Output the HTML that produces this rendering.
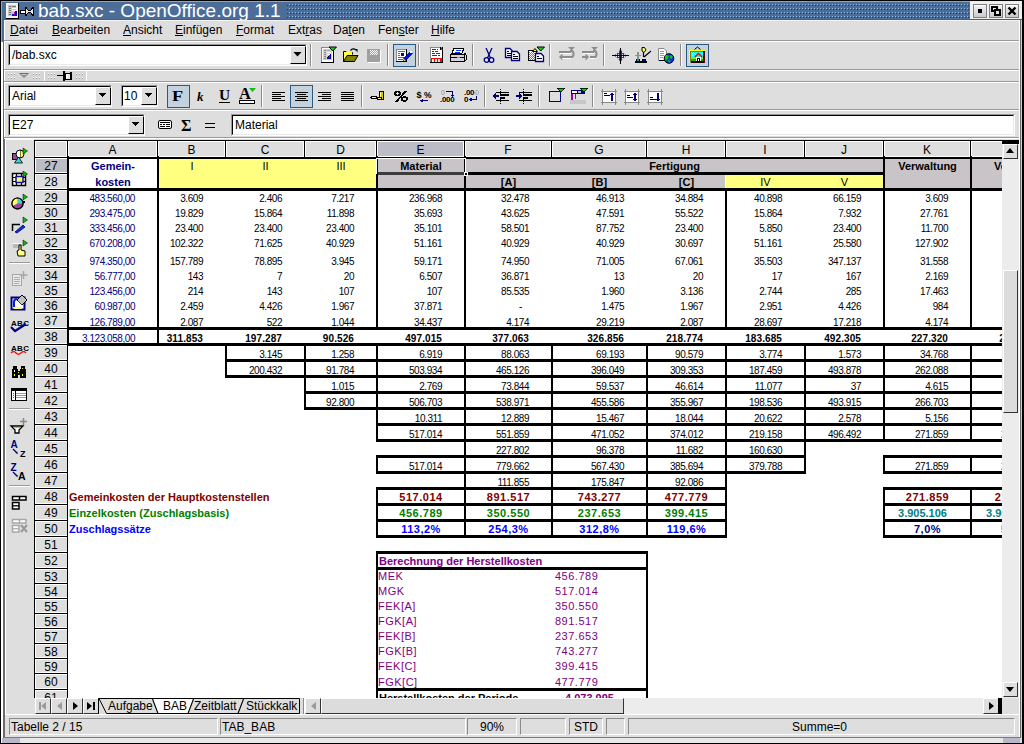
<!DOCTYPE html><html><head><meta charset="utf-8"><style>
html,body{margin:0;padding:0;}
body{width:1024px;height:744px;overflow:hidden;position:relative;background:#dedede;font-family:"Liberation Sans", sans-serif;}
div{position:absolute;}
.t{white-space:nowrap;line-height:1;}
svg{position:absolute;}
</style></head><body>
<div style="left:0px;top:0px;width:1024px;height:1px;background:#000"></div>
<div style="left:0px;top:1px;width:970px;height:1px;background:#7aaae0"></div>
<svg style="left:0;top:2px" width="970" height="17"><defs><pattern id="dots" x="0" y="0" width="3" height="4" patternUnits="userSpaceOnUse"><rect width="3" height="4" fill="#4d6d99"/><rect x="1" y="2" width="1" height="1" fill="#86b6ec"/><rect x="2" y="3" width="1" height="1" fill="#30343a"/></pattern></defs><rect width="970" height="17" fill="url(#dots)"/></svg>
<div style="left:0px;top:2px;width:287px;height:17px;background:#4d6d99"></div>
<div style="left:0px;top:19px;width:1024px;height:1px;background:#5a5a5a"></div>
<svg style="left:6px;top:3px" width="30" height="16" shape-rendering="crispEdges"><rect x="0" y="0" width="13" height="16" fill="#000"/><rect x="0" y="0" width="12" height="15" fill="#f4f2f4"/><rect x="2" y="2" width="8" height="11" fill="#c8c8c8"/><rect x="3" y="3" width="2" height="1" fill="#777"/><rect x="6" y="3" width="4" height="1" fill="#777"/><rect x="3" y="5" width="2" height="1" fill="#777"/><rect x="6" y="5" width="4" height="1" fill="#fff"/><rect x="3" y="7" width="2" height="1" fill="#777"/><rect x="6" y="7" width="4" height="1" fill="#fff"/><rect x="3" y="9" width="2" height="1" fill="#777"/><rect x="3" y="11" width="2" height="1" fill="#777"/><rect x="6" y="11" width="3" height="2" fill="#0010ff"/><rect x="8" y="9" width="1" height="4" fill="#a000a0"/><rect x="9" y="8" width="2" height="5" fill="#0000c0"/><rect x="14" y="7" width="6" height="4" fill="#000"/><rect x="15" y="8" width="5" height="2" fill="#fff"/><path d="M19 4 L21 4 L22 7 L25 7 L26 4 L28 4 L28 13 L26 13 L25 10 L22 10 L21 13 L19 13 Z" fill="#000"/><path d="M20 6 L21 6 L22 8 L25 8 L26 6 L27 6 L27 11 L26 11 L25 9 L22 9 L21 11 L20 11 Z" fill="#e8e8f0"/></svg>
<div class="t" style="left:38px;top:1px;color:#fff;font-size:19px;letter-spacing:0px">bab.sxc - OpenOffice.org 1.1</div>
<div style="left:970px;top:1px;width:52px;height:18px;background:#efefef"></div>
<div style="left:973px;top:4px;width:14px;height:14px;background:linear-gradient(#f4f4f4,#c8c8d0);border:1px solid #808080;box-sizing:border-box"></div>
<div style="left:974px;top:5px;width:12px;height:1px;background:#fff"></div>
<div style="left:989px;top:4px;width:14px;height:14px;background:linear-gradient(#f4f4f4,#c8c8d0);border:1px solid #808080;box-sizing:border-box"></div>
<div style="left:990px;top:5px;width:12px;height:1px;background:#fff"></div>
<div style="left:1005px;top:4px;width:14px;height:14px;background:linear-gradient(#f4f4f4,#c8c8d0);border:1px solid #808080;box-sizing:border-box"></div>
<div style="left:1006px;top:5px;width:12px;height:1px;background:#fff"></div>
<div style="left:978px;top:9px;width:4px;height:4px;background:#000"></div>
<svg style="left:991px;top:6px" width="11" height="11" shape-rendering="crispEdges"><rect x="0" y="0" width="7" height="6" fill="#000"/><rect x="2" y="2" width="3" height="2" fill="#e8e8e8"/><rect x="3" y="3" width="7" height="7" fill="#000"/><rect x="5" y="5" width="3" height="3" fill="#e0e0e0"/></svg>
<svg style="left:1007px;top:6px" width="11" height="11"><path d="M1.5 1.5 L8.5 8.5 M8.5 1.5 L1.5 8.5" stroke="#000" stroke-width="2.4"/><rect x="4" y="4" width="2" height="2" fill="#000"/></svg>
<div style="left:0px;top:1px;width:1px;height:743px;background:#000"></div>
<div style="left:1px;top:1px;width:1px;height:41px;background:#7aaae0"></div>
<div style="left:2px;top:2px;width:1px;height:40px;background:#4d6d99"></div>
<div style="left:1px;top:42px;width:1px;height:702px;background:#fff"></div>
<div style="left:2px;top:42px;width:1px;height:702px;background:#fff"></div>
<div style="left:3px;top:20px;width:1px;height:724px;background:#6a6a6a"></div>
<div style="left:4px;top:20px;width:1px;height:119px;background:#fff"></div>
<div style="left:4px;top:139px;width:1px;height:598px;background:#6a6a6a"></div>
<div style="left:1019px;top:20px;width:1px;height:718px;background:#fff"></div>
<div style="left:1020px;top:20px;width:1px;height:718px;background:#6a6a6a"></div>
<div style="left:1021px;top:20px;width:1px;height:718px;background:#cfcfcf"></div>
<div style="left:1022px;top:0px;width:1px;height:744px;background:#000"></div>
<div style="left:1023px;top:0px;width:1px;height:744px;background:#000"></div>
<div style="left:4px;top:20px;width:1015px;height:1px;background:#f4f4f4"></div>
<div style="left:4px;top:40px;width:1015px;height:1px;background:#9a9a9a"></div>
<div class="t" style="left:10px;top:24px;color:#000;font-size:12px"><u>D</u>atei</div>
<div class="t" style="left:52px;top:24px;color:#000;font-size:12px"><u>B</u>earbeiten</div>
<div class="t" style="left:123px;top:24px;color:#000;font-size:12px"><u>A</u>nsicht</div>
<div class="t" style="left:175px;top:24px;color:#000;font-size:12px"><u>E</u>infügen</div>
<div class="t" style="left:236px;top:24px;color:#000;font-size:12px"><u>F</u>ormat</div>
<div class="t" style="left:288px;top:24px;color:#000;font-size:12px">Ext<u>r</u>as</div>
<div class="t" style="left:333px;top:24px;color:#000;font-size:12px">Da<u>t</u>en</div>
<div class="t" style="left:378px;top:24px;color:#000;font-size:12px">Fen<u>s</u>ter</div>
<div class="t" style="left:431px;top:24px;color:#000;font-size:12px"><u>H</u>ilfe</div>
<div style="left:4px;top:41px;width:1015px;height:1px;background:#fff"></div>
<div style="left:4px;top:69px;width:1015px;height:1px;background:#9a9a9a"></div>
<div style="left:4px;top:70px;width:1015px;height:1px;background:#fff"></div>
<div style="left:8px;top:44px;width:299px;height:22px;background:#fff;border-top:1px solid #9a9a9a;border-left:1px solid #9a9a9a;border-right:1px solid #fff;border-bottom:1px solid #fff;box-sizing:border-box"></div>
<div style="left:9px;top:45px;width:297px;height:20px;border-top:1px solid #000;border-left:1px solid #000;border-right:1px solid #eaeaea;border-bottom:1px solid #eaeaea;box-sizing:border-box"></div>
<div class="t" style="left:12px;top:49px;font-size:12px;color:#000">/bab.sxc</div>
<div style="left:290px;top:46px;width:16px;height:18px;background:#dedede;border-top:1px solid #fff;border-left:1px solid #fff;border-right:1px solid #000;border-bottom:1px solid #000;box-sizing:border-box"></div>
<svg style="left:293px;top:52px" width="10" height="6"><path d="M0.5 0 L8.5 0 L4.5 4.5 Z" fill="#000"/></svg>
<div style="left:310px;top:44px;width:1px;height:22px;background:#8a8a8a"></div>
<div style="left:311px;top:44px;width:1px;height:22px;background:#fff"></div>
<div style="left:387px;top:44px;width:1px;height:22px;background:#8a8a8a"></div>
<div style="left:388px;top:44px;width:1px;height:22px;background:#fff"></div>
<div style="left:418px;top:44px;width:1px;height:22px;background:#8a8a8a"></div>
<div style="left:419px;top:44px;width:1px;height:22px;background:#fff"></div>
<div style="left:472px;top:44px;width:1px;height:22px;background:#8a8a8a"></div>
<div style="left:473px;top:44px;width:1px;height:22px;background:#fff"></div>
<div style="left:549px;top:44px;width:1px;height:22px;background:#8a8a8a"></div>
<div style="left:550px;top:44px;width:1px;height:22px;background:#fff"></div>
<div style="left:603px;top:44px;width:1px;height:22px;background:#8a8a8a"></div>
<div style="left:604px;top:44px;width:1px;height:22px;background:#fff"></div>
<div style="left:680px;top:44px;width:1px;height:22px;background:#8a8a8a"></div>
<div style="left:681px;top:44px;width:1px;height:22px;background:#fff"></div>
<div style="left:393px;top:44px;width:23px;height:23px;background:#c2d2de;border:1px solid #2a5a84;box-sizing:border-box"></div>
<div style="left:686px;top:44px;width:23px;height:23px;background:#c2d2de;border:1px solid #2a5a84;box-sizing:border-box"></div>
<svg style="left:0px;top:0px" width="720" height="70" shape-rendering="crispEdges"><rect x="321" y="47" width="13" height="16" fill="#000"/><rect x="321" y="47" width="12" height="15" fill="#888"/><rect x="322" y="48" width="11" height="14" fill="#fff"/><rect x="323" y="49" width="9" height="11" fill="#d0d0d0"/><rect x="324" y="50" width="2" height="1" fill="#888"/><rect x="327" y="50" width="3" height="1" fill="#a8a8a8"/><rect x="324" y="52" width="2" height="1" fill="#888"/><rect x="327" y="52" width="4" height="1" fill="#fff"/><rect x="324" y="54" width="2" height="1" fill="#888"/><rect x="327" y="54" width="4" height="1" fill="#fff"/><rect x="324" y="56" width="2" height="1" fill="#888"/><rect x="324" y="58" width="2" height="1" fill="#888"/><rect x="327" y="57" width="3" height="2" fill="#0000ff"/><rect x="329" y="55" width="1" height="3" fill="#a000a0"/><rect x="330" y="54" width="1" height="5" fill="#0000a0"/><rect x="328" y="56" width="1" height="1" fill="#000"/><path d="M329 47 L336.5 47 L332.75 51 Z" fill="#00e000" stroke="#000" stroke-width="1" shape-rendering="auto"/></svg>
<svg style="left:0px;top:0px" width="720" height="70" shape-rendering="crispEdges"><path d="M343.5 61.5 L343.5 51.5 L346 51.5 L347 52.5 L352.5 52.5 L352.5 54.5" fill="#ffff40" stroke="#000" stroke-width="1" shape-rendering="auto"/><rect x="344" y="52" width="8" height="2" fill="#ffff40"/><rect x="344" y="54" width="3" height="6" fill="#ffff40"/><rect x="345" y="53" width="1" height="1" fill="#fff"/><rect x="345" y="55" width="1" height="1" fill="#fff"/><rect x="347" y="53" width="1" height="1" fill="#fff"/><path d="M343.5 61.5 L347 55.5 L358 55.5 L354.5 61.5 Z" fill="#808000" stroke="#000" stroke-width="1" shape-rendering="auto"/><path d="M350.5 50.5 Q353 47.5 356 50" fill="none" stroke="#000" stroke-width="1.2" shape-rendering="auto"/><path d="M355 49 L357.5 49 L357.5 52.5 Z" fill="#000" shape-rendering="auto"/></svg>
<svg style="left:0px;top:0px" width="720" height="70" shape-rendering="crispEdges"><rect x="367" y="49" width="13" height="13" fill="#a0a0a0"/><rect x="368" y="62" width="13" height="1" fill="#fff"/><rect x="380" y="50" width="1" height="13" fill="#fff"/><rect x="370" y="50" width="1" height="1" fill="#fff"/><rect x="372" y="50" width="1" height="1" fill="#fff"/><rect x="374" y="50" width="1" height="1" fill="#fff"/><rect x="376" y="50" width="1" height="1" fill="#fff"/><rect x="371" y="51" width="1" height="1" fill="#fff"/><rect x="373" y="51" width="1" height="1" fill="#fff"/><rect x="375" y="51" width="1" height="1" fill="#fff"/><rect x="377" y="51" width="1" height="1" fill="#fff"/><rect x="370" y="52" width="1" height="1" fill="#fff"/><rect x="372" y="52" width="1" height="1" fill="#fff"/><rect x="374" y="52" width="1" height="1" fill="#fff"/><rect x="376" y="52" width="1" height="1" fill="#fff"/><rect x="371" y="53" width="1" height="1" fill="#fff"/><rect x="373" y="53" width="1" height="1" fill="#fff"/><rect x="375" y="53" width="1" height="1" fill="#fff"/><rect x="377" y="53" width="1" height="1" fill="#fff"/><rect x="370" y="54" width="1" height="1" fill="#fff"/><rect x="372" y="54" width="1" height="1" fill="#fff"/><rect x="374" y="54" width="1" height="1" fill="#fff"/><rect x="376" y="54" width="1" height="1" fill="#fff"/></svg>
<svg style="left:0px;top:0px" width="720" height="70" shape-rendering="crispEdges"><rect x="396" y="49" width="11" height="13" fill="#000"/><rect x="396" y="49" width="10" height="12" fill="#888"/><rect x="397" y="50" width="9" height="11" fill="#fff"/><rect x="398" y="51" width="7" height="1" fill="#666"/><rect x="398" y="53" width="2" height="1" fill="#666"/><rect x="398" y="55" width="2" height="1" fill="#666"/><rect x="398" y="57" width="6" height="1" fill="#666"/><rect x="398" y="59" width="5" height="1" fill="#666"/><rect x="401" y="53" width="3" height="3" fill="#0000ff"/><rect x="402" y="54" width="1" height="1" fill="#000080"/><path d="M403.5 58.5 L410.5 51.5 L412.5 53.5 L405.5 60.5 Z" fill="#0010e0" stroke="#000" stroke-width="0.7" shape-rendering="auto"/><rect x="410" y="51" width="2" height="2" fill="#fff"/><path d="M402.5 61 L403.5 58.5 L405.5 60.5 Z" fill="#f0e000" shape-rendering="auto"/><rect x="403" y="60" width="1" height="1" fill="#008000"/></svg>
<svg style="left:0px;top:0px" width="720" height="70" shape-rendering="crispEdges"><rect x="430" y="47" width="13" height="16" fill="#000"/><rect x="430" y="47" width="12" height="15" fill="#888"/><rect x="431" y="48" width="11" height="14" fill="#fff"/><path d="M440 47 L443 50 L440 50 Z" fill="#ff0000"/><rect x="440" y="47" width="1" height="3" fill="#000"/><rect x="432" y="49" width="4" height="1" fill="#0030ff"/><rect x="437" y="49" width="1" height="1" fill="#0030ff"/><rect x="432" y="51" width="2" height="1" fill="#0030ff"/><rect x="435" y="51" width="3" height="1" fill="#0030ff"/><rect x="432" y="53" width="3" height="1" fill="#0030ff"/><rect x="436" y="53" width="4" height="1" fill="#0030ff"/><rect x="432" y="55" width="5" height="1" fill="#0030ff"/><rect x="438" y="55" width="2" height="1" fill="#0030ff"/><rect x="431" y="58" width="11" height="4" fill="#ff0000"/><rect x="432" y="59" width="2" height="3" fill="#f0f0f0"/><rect x="435" y="59" width="2" height="3" fill="#f0f0f0"/><rect x="438" y="59" width="2" height="3" fill="#f0f0f0"/></svg>
<svg style="left:0px;top:0px" width="720" height="70" shape-rendering="crispEdges"><path d="M454 48 L464 48 L462 53 L452 53 Z" fill="#fff" stroke="#000" stroke-width="1"/><rect x="456" y="49.5" width="5" height="1" fill="#0030ff"/><rect x="455" y="51.5" width="5" height="1" fill="#0030ff"/><rect x="450.5" y="54.5" width="14" height="3.5" fill="#d8d0d8" stroke="#000" stroke-width="1"/><rect x="450.5" y="57.5" width="14" height="4" fill="#d8d0d8" stroke="#000" stroke-width="1"/><rect x="457" y="57" width="3" height="1.2" fill="#00ff00"/><path d="M464.5 53 L466 55 L466 60 L464.5 61.5" fill="none" stroke="#000" stroke-width="1"/></svg>
<svg style="left:483px;top:48px" width="12" height="16" shape-rendering="crispEdges"><path d="M3 0 L7.5 10 M9 0 L4.5 10" stroke="#000080" stroke-width="1.3" fill="none" shape-rendering="auto"/><circle cx="3.5" cy="12" r="2.3" fill="none" stroke="#000080" stroke-width="1.3" shape-rendering="auto"/><circle cx="8.5" cy="12" r="2.3" fill="none" stroke="#000080" stroke-width="1.3" shape-rendering="auto"/></svg>
<svg style="left:0px;top:0px" width="720" height="70" shape-rendering="crispEdges"><path d="M505.5 48.5 L510 48.5 L512 50.5 L512 57.5 L505.5 57.5 Z" fill="#fff" stroke="#000080" stroke-width="1.3" shape-rendering="auto"/><rect x="507" y="51" width="2" height="1" fill="#000"/><rect x="507" y="53" width="4" height="1" fill="#000"/><rect x="507" y="55" width="4" height="1" fill="#000"/><path d="M511.5 51.5 L517 51.5 L519.5 54 L519.5 60.5 L511.5 60.5 Z" fill="#fff" stroke="#000080" stroke-width="1.3" shape-rendering="auto"/><rect x="513" y="54" width="2" height="1" fill="#000"/><rect x="513" y="56" width="5" height="1" fill="#000"/><rect x="513" y="58" width="5" height="1" fill="#000"/></svg>
<svg style="left:0px;top:0px" width="720" height="70" shape-rendering="crispEdges"><rect x="528" y="50" width="9" height="11" fill="#000"/><rect x="529" y="51" width="7" height="9" fill="#fff"/><rect x="529" y="52" width="1" height="1" fill="#908000"/><rect x="531" y="52" width="1" height="1" fill="#908000"/><rect x="533" y="52" width="1" height="1" fill="#908000"/><rect x="530" y="53" width="1" height="1" fill="#908000"/><rect x="532" y="53" width="1" height="1" fill="#908000"/><rect x="534" y="53" width="1" height="1" fill="#908000"/><rect x="529" y="54" width="1" height="1" fill="#908000"/><rect x="531" y="54" width="1" height="1" fill="#908000"/><rect x="533" y="54" width="1" height="1" fill="#908000"/><rect x="530" y="55" width="1" height="1" fill="#908000"/><rect x="532" y="55" width="1" height="1" fill="#908000"/><rect x="534" y="55" width="1" height="1" fill="#908000"/><rect x="529" y="56" width="1" height="1" fill="#908000"/><rect x="531" y="56" width="1" height="1" fill="#908000"/><rect x="533" y="56" width="1" height="1" fill="#908000"/><rect x="530" y="57" width="1" height="1" fill="#908000"/><rect x="532" y="57" width="1" height="1" fill="#908000"/><rect x="534" y="57" width="1" height="1" fill="#908000"/><rect x="529" y="58" width="1" height="1" fill="#908000"/><rect x="531" y="58" width="1" height="1" fill="#908000"/><rect x="533" y="58" width="1" height="1" fill="#908000"/><rect x="530" y="59" width="1" height="1" fill="#908000"/><rect x="532" y="59" width="1" height="1" fill="#908000"/><rect x="534" y="59" width="1" height="1" fill="#908000"/><path d="M532.5 51.5 L535 48.5 L537.5 51.5 Z" fill="#ffff00" stroke="#000" stroke-width="1" shape-rendering="auto"/><path d="M535.5 53.5 L541 53.5 L543.5 56 L543.5 61.5 L535.5 61.5 Z" fill="#fff" stroke="#000080" stroke-width="1.3" shape-rendering="auto"/><rect x="537" y="56" width="2" height="1" fill="#000"/><rect x="537" y="58" width="5" height="1" fill="#000"/><path d="M537 47 L544.5 47 L540.75 51 Z" fill="#00e000" stroke="#000" stroke-width="1" shape-rendering="auto"/></svg>
<svg style="left:0px;top:0px" width="720" height="70" shape-rendering="crispEdges"><path d="M568 47 L575 47 L571.5 50.5 Z" fill="#8c8c8c" shape-rendering="auto"/><rect x="559" y="51" width="12" height="2" fill="#8c8c8c"/><path d="M570 51 L571.5 51 Q573.5 51 573.5 54 Q573.5 57 571.5 57 L570 57" fill="none" stroke="#8c8c8c" stroke-width="2" shape-rendering="auto"/><rect x="561" y="56" width="10" height="2" fill="#8c8c8c"/><path d="M559 57 L562.5 53.5 L562.5 60.5 Z" fill="#8c8c8c" shape-rendering="auto"/><rect x="560" y="53" width="11" height="1" fill="#fff"/><rect x="562" y="58" width="9" height="1" fill="#fff"/></svg>
<svg style="left:0px;top:0px" width="720" height="70" shape-rendering="crispEdges"><path d="M591 47 L598 47 L594.5 50.5 Z" fill="#8c8c8c" shape-rendering="auto"/><rect x="582" y="51" width="12" height="2" fill="#8c8c8c"/><path d="M593 51 L594.5 51 Q596.5 51 596.5 54 Q596.5 57 594.5 57 L590 57" fill="none" stroke="#8c8c8c" stroke-width="2" shape-rendering="auto"/><rect x="582" y="56" width="4" height="2" fill="#8c8c8c"/><path d="M589 57 L585.5 53.5 L585.5 60.5 Z" fill="#8c8c8c" shape-rendering="auto"/><rect x="583" y="53" width="11" height="1" fill="#fff"/><rect x="590" y="58" width="5" height="1" fill="#fff"/></svg>
<svg style="left:0px;top:0px" width="720" height="70" shape-rendering="crispEdges"><defs><pattern id="nvd" width="2" height="2" patternUnits="userSpaceOnUse"><rect width="2" height="2" fill="#2030b0"/><rect width="1" height="1" fill="#e8e8ff"/></pattern></defs><path d="M620.5 48 Q622 54 628.5 55.5 Q622 57 620.5 63 Q619 57 612.5 55.5 Q619 54 620.5 48 Z" fill="url(#nvd)" shape-rendering="auto"/><rect x="612" y="55" width="17" height="1" fill="#000"/><rect x="620" y="48" width="1" height="16" fill="#000"/></svg>
<svg style="left:0px;top:0px" width="720" height="70" shape-rendering="crispEdges"><rect x="646" y="47" width="1" height="1" fill="#ffff00"/><rect x="648" y="47" width="1" height="1" fill="#ffff00"/><rect x="650" y="47" width="1" height="1" fill="#ffff00"/><rect x="645" y="48" width="1" height="1" fill="#ffff00"/><rect x="647" y="48" width="1" height="1" fill="#ffff00"/><rect x="649" y="48" width="1" height="1" fill="#ffff00"/><rect x="651" y="48" width="1" height="1" fill="#ffff00"/><rect x="646" y="49" width="1" height="1" fill="#ffff00"/><rect x="648" y="49" width="1" height="1" fill="#ffff00"/><rect x="650" y="49" width="1" height="1" fill="#ffff00"/><rect x="645" y="50" width="1" height="1" fill="#ffff00"/><rect x="647" y="50" width="1" height="1" fill="#ffff00"/><rect x="649" y="50" width="1" height="1" fill="#ffff00"/><rect x="651" y="50" width="1" height="1" fill="#ffff00"/><rect x="646" y="51" width="1" height="1" fill="#ffff00"/><rect x="648" y="51" width="1" height="1" fill="#ffff00"/><rect x="650" y="51" width="1" height="1" fill="#ffff00"/><path d="M642 47.5 L644.5 47.5 L646 50 L644 52.5 L642 51 Z" fill="#ffff40" stroke="#000" stroke-width="1" shape-rendering="auto"/><path d="M643.5 52 L643.5 57 M644 57 L651 51" stroke="#000" stroke-width="1.2" shape-rendering="auto"/><path d="M635 55.5 L641 55.5 M638 52 L638 59" stroke="#909090" stroke-width="1.5"/><rect x="636" y="59" width="4" height="3" fill="#000"/><rect x="635" y="61" width="6" height="2" fill="#000"/><rect x="637" y="59" width="2" height="2" fill="#00a0a0"/><rect x="642" y="59" width="4" height="3" fill="#000"/><rect x="641" y="61" width="6" height="2" fill="#000"/><rect x="643" y="59" width="2" height="2" fill="#0000a0"/></svg>
<svg style="left:0px;top:0px" width="720" height="70" shape-rendering="crispEdges"><path d="M658.5 48.5 L664 48.5 L666.5 51 L666.5 60.5 L658.5 60.5 Z" fill="#fff" stroke="#888" stroke-width="1" shape-rendering="auto"/><rect x="659" y="60" width="8" height="1" fill="#000"/><rect x="660" y="51" width="4" height="1" fill="#999"/><rect x="660" y="53" width="4" height="1" fill="#999"/><rect x="660" y="55" width="4" height="1" fill="#999"/><rect x="660" y="57" width="3" height="1" fill="#999"/><circle cx="669" cy="58.5" r="4.8" fill="#0030e0" stroke="#000" stroke-width="1" shape-rendering="auto"/><path d="M665 56 Q667 54 669 56 Q668 59 666 61 Q664.5 59 665 56 Z M670 55 L672.5 56 L672 59 L670 58 Z M668 60 L671 61 L669 63 Z" fill="#00d000" shape-rendering="auto"/></svg>
<svg style="left:0px;top:0px" width="720" height="70" shape-rendering="crispEdges"><path d="M694.5 49.5 L697.5 47 L700.5 49.5" fill="none" stroke="#000" stroke-width="1" shape-rendering="auto"/><rect x="689" y="50" width="16" height="13" fill="#ffff00"/><rect x="690" y="51" width="15" height="12" fill="#000"/><rect x="690" y="51" width="1" height="12" fill="#fff" opacity="0.6"/><rect x="703" y="52" width="2" height="11" fill="#a00000" opacity="0.6"/><rect x="690" y="51" width="13" height="1" fill="#808000"/><rect x="690" y="51" width="1" height="11" fill="#808000"/><rect x="691" y="52" width="12" height="9" fill="#00ffff"/><rect x="692" y="53" width="1" height="1" fill="#fff"/><rect x="694" y="53" width="1" height="1" fill="#fff"/><rect x="693" y="54" width="1" height="1" fill="#fff"/><rect x="695" y="54" width="1" height="1" fill="#fff"/><rect x="692" y="55" width="1" height="1" fill="#fff"/><rect x="691" y="58" width="12" height="3" fill="#00c000"/><rect x="691" y="58" width="12" height="1" fill="#c0ff00" opacity="0.7"/><path d="M695 57 L698.5 53.5 L702 57" fill="none" stroke="#ff0000" stroke-width="1.5" shape-rendering="auto"/><rect x="696" y="57" width="5" height="4" fill="#fff"/><rect x="697" y="58" width="3" height="3" fill="#000"/><rect x="698" y="59" width="1" height="2" fill="#fff"/><rect x="691" y="61" width="13" height="2" fill="#200000"/></svg>
<div style="left:5px;top:71px;width:40px;height:10px;background:#d6d6d6;border-right:1px solid #fff;box-sizing:border-box"></div>
<div style="left:8px;top:73px;width:1px;height:1px;background:#fff"></div>
<div style="left:8px;top:74px;width:1px;height:1px;background:#a0a0a0"></div>
<div style="left:11px;top:73px;width:1px;height:1px;background:#fff"></div>
<div style="left:11px;top:74px;width:1px;height:1px;background:#a0a0a0"></div>
<div style="left:14px;top:73px;width:1px;height:1px;background:#fff"></div>
<div style="left:14px;top:74px;width:1px;height:1px;background:#a0a0a0"></div>
<div style="left:8px;top:77px;width:1px;height:1px;background:#fff"></div>
<div style="left:8px;top:78px;width:1px;height:1px;background:#a0a0a0"></div>
<div style="left:11px;top:77px;width:1px;height:1px;background:#fff"></div>
<div style="left:11px;top:78px;width:1px;height:1px;background:#a0a0a0"></div>
<div style="left:14px;top:77px;width:1px;height:1px;background:#fff"></div>
<div style="left:14px;top:78px;width:1px;height:1px;background:#a0a0a0"></div>
<div style="left:33px;top:73px;width:1px;height:1px;background:#fff"></div>
<div style="left:33px;top:74px;width:1px;height:1px;background:#a0a0a0"></div>
<div style="left:36px;top:73px;width:1px;height:1px;background:#fff"></div>
<div style="left:36px;top:74px;width:1px;height:1px;background:#a0a0a0"></div>
<div style="left:39px;top:73px;width:1px;height:1px;background:#fff"></div>
<div style="left:39px;top:74px;width:1px;height:1px;background:#a0a0a0"></div>
<div style="left:33px;top:77px;width:1px;height:1px;background:#fff"></div>
<div style="left:33px;top:78px;width:1px;height:1px;background:#a0a0a0"></div>
<div style="left:36px;top:77px;width:1px;height:1px;background:#fff"></div>
<div style="left:36px;top:78px;width:1px;height:1px;background:#a0a0a0"></div>
<div style="left:39px;top:77px;width:1px;height:1px;background:#fff"></div>
<div style="left:39px;top:78px;width:1px;height:1px;background:#a0a0a0"></div>
<div style="left:45px;top:71px;width:42px;height:10px;background:#d6d6d6;border-right:1px solid #fff;box-sizing:border-box"></div>
<div style="left:48px;top:73px;width:1px;height:1px;background:#fff"></div>
<div style="left:48px;top:74px;width:1px;height:1px;background:#a0a0a0"></div>
<div style="left:51px;top:73px;width:1px;height:1px;background:#fff"></div>
<div style="left:51px;top:74px;width:1px;height:1px;background:#a0a0a0"></div>
<div style="left:54px;top:73px;width:1px;height:1px;background:#fff"></div>
<div style="left:54px;top:74px;width:1px;height:1px;background:#a0a0a0"></div>
<div style="left:48px;top:77px;width:1px;height:1px;background:#fff"></div>
<div style="left:48px;top:78px;width:1px;height:1px;background:#a0a0a0"></div>
<div style="left:51px;top:77px;width:1px;height:1px;background:#fff"></div>
<div style="left:51px;top:78px;width:1px;height:1px;background:#a0a0a0"></div>
<div style="left:54px;top:77px;width:1px;height:1px;background:#fff"></div>
<div style="left:54px;top:78px;width:1px;height:1px;background:#a0a0a0"></div>
<div style="left:76px;top:73px;width:1px;height:1px;background:#fff"></div>
<div style="left:76px;top:74px;width:1px;height:1px;background:#a0a0a0"></div>
<div style="left:79px;top:73px;width:1px;height:1px;background:#fff"></div>
<div style="left:79px;top:74px;width:1px;height:1px;background:#a0a0a0"></div>
<div style="left:82px;top:73px;width:1px;height:1px;background:#fff"></div>
<div style="left:82px;top:74px;width:1px;height:1px;background:#a0a0a0"></div>
<div style="left:76px;top:77px;width:1px;height:1px;background:#fff"></div>
<div style="left:76px;top:78px;width:1px;height:1px;background:#a0a0a0"></div>
<div style="left:79px;top:77px;width:1px;height:1px;background:#fff"></div>
<div style="left:79px;top:78px;width:1px;height:1px;background:#a0a0a0"></div>
<div style="left:82px;top:77px;width:1px;height:1px;background:#fff"></div>
<div style="left:82px;top:78px;width:1px;height:1px;background:#a0a0a0"></div>
<svg style="left:19px;top:73px" width="11" height="6" shape-rendering="crispEdges"><path d="M0 0 L10 0 L5 5 Z" fill="#6a6a6a" shape-rendering="auto"/><path d="M2 1 L8 1 L5 4 Z" fill="#d6d6d6" shape-rendering="auto"/><path d="M3.5 2 L6.5 2 L5 3.2 Z" fill="#6a6a6a" shape-rendering="auto"/></svg>
<svg style="left:57px;top:70px" width="18" height="12" shape-rendering="crispEdges"><rect x="0" y="5" width="6" height="1" fill="#000"/><rect x="6" y="1" width="2" height="10" fill="#000"/><rect x="8" y="3" width="6" height="6" fill="#e8e8e8" stroke="#000" stroke-width="1"/><rect x="13" y="2" width="2" height="8" fill="#000"/><rect x="9" y="4" width="2" height="4" fill="#fff"/></svg>
<div style="left:4px;top:81px;width:1015px;height:1px;background:#9a9a9a"></div>
<div style="left:4px;top:82px;width:1015px;height:1px;background:#fff"></div>
<div style="left:4px;top:109px;width:1015px;height:1px;background:#9a9a9a"></div>
<div style="left:4px;top:110px;width:1015px;height:1px;background:#fff"></div>
<div style="left:8px;top:85px;width:104px;height:22px;background:#fff;border-top:1px solid #9a9a9a;border-left:1px solid #9a9a9a;border-right:1px solid #fff;border-bottom:1px solid #fff;box-sizing:border-box"></div>
<div style="left:9px;top:86px;width:102px;height:20px;border-top:1px solid #000;border-left:1px solid #000;border-right:1px solid #eaeaea;border-bottom:1px solid #eaeaea;box-sizing:border-box"></div>
<div class="t" style="left:12px;top:90px;font-size:12px;color:#000">Arial</div>
<div style="left:95px;top:87px;width:16px;height:18px;background:#dedede;border-top:1px solid #fff;border-left:1px solid #fff;border-right:1px solid #000;border-bottom:1px solid #000;box-sizing:border-box"></div>
<svg style="left:98px;top:93px" width="10" height="6" shape-rendering="crispEdges"><path d="M0.5 0 L8.5 0 L4.5 4.5 Z" fill="#000"/></svg>
<div style="left:121px;top:85px;width:37px;height:22px;background:#fff;border-top:1px solid #9a9a9a;border-left:1px solid #9a9a9a;border-right:1px solid #fff;border-bottom:1px solid #fff;box-sizing:border-box"></div>
<div style="left:122px;top:86px;width:35px;height:20px;border-top:1px solid #000;border-left:1px solid #000;border-right:1px solid #eaeaea;border-bottom:1px solid #eaeaea;box-sizing:border-box"></div>
<div class="t" style="left:124px;top:90px;font-size:12px;color:#000">10</div>
<div style="left:141px;top:87px;width:16px;height:18px;background:#dedede;border-top:1px solid #fff;border-left:1px solid #fff;border-right:1px solid #000;border-bottom:1px solid #000;box-sizing:border-box"></div>
<svg style="left:144px;top:93px" width="10" height="6" shape-rendering="crispEdges"><path d="M0.5 0 L8.5 0 L4.5 4.5 Z" fill="#000"/></svg>
<div style="left:167px;top:85px;width:23px;height:23px;background:#c2d2de;border:1px solid #2a5a84;box-sizing:border-box"></div>
<div class="t" style="left:172px;top:89px;font-family:'Liberation Serif',serif;font-weight:bold;font-size:15px;color:#000;transform:scaleX(1.22);transform-origin:0 0">F</div>
<div class="t" style="left:197px;top:90px;font-family:'Liberation Serif',serif;font-weight:bold;font-style:italic;font-size:13px;color:#000">k</div>
<div class="t" style="left:219px;top:89px;font-family:'Liberation Serif',serif;font-weight:bold;font-size:14px;color:#000;transform:scaleX(1.1);transform-origin:0 0">U</div>
<div style="left:219px;top:102px;width:11px;height:1px;background:#000"></div>
<svg style="left:239px;top:87px" width="18" height="18" shape-rendering="crispEdges"><text x="0" y="12" font-size="16.5" font-weight="bold" font-family="Liberation Serif" fill="#000">A</text><rect x="0.5" y="13.5" width="15" height="3" fill="#fff" stroke="#000"/><path d="M10 1 L17 1 L13.5 5 Z" fill="#10c010" shape-rendering="auto"/></svg>
<div style="left:261px;top:85px;width:1px;height:22px;background:#8a8a8a"></div>
<div style="left:262px;top:85px;width:1px;height:22px;background:#fff"></div>
<svg style="left:272px;top:92px" width="14" height="10" shape-rendering="crispEdges"><rect x="0" y="0" width="13" height="1" fill="#000"/><rect x="0" y="2" width="9" height="1" fill="#000"/><rect x="0" y="4" width="13" height="1" fill="#000"/><rect x="0" y="6" width="9" height="1" fill="#000"/><rect x="0" y="8" width="13" height="1" fill="#000"/></svg>
<div style="left:290px;top:85px;width:23px;height:23px;background:#c2d2de;border:1px solid #2a5a84;box-sizing:border-box"></div>
<svg style="left:295px;top:92px" width="14" height="10" shape-rendering="crispEdges"><rect x="0" y="0" width="13" height="1" fill="#000"/><rect x="2" y="2" width="9" height="1" fill="#000"/><rect x="0" y="4" width="13" height="1" fill="#000"/><rect x="2" y="6" width="9" height="1" fill="#000"/><rect x="0" y="8" width="13" height="1" fill="#000"/></svg>
<svg style="left:318px;top:92px" width="14" height="10" shape-rendering="crispEdges"><rect x="0" y="0" width="13" height="1" fill="#000"/><rect x="4" y="2" width="9" height="1" fill="#000"/><rect x="0" y="4" width="13" height="1" fill="#000"/><rect x="4" y="6" width="9" height="1" fill="#000"/><rect x="0" y="8" width="13" height="1" fill="#000"/></svg>
<svg style="left:341px;top:92px" width="14" height="10" shape-rendering="crispEdges"><rect x="0" y="0" width="13" height="1" fill="#000"/><rect x="0" y="2" width="13" height="1" fill="#000"/><rect x="0" y="4" width="13" height="1" fill="#000"/><rect x="0" y="6" width="13" height="1" fill="#000"/><rect x="0" y="8" width="13" height="1" fill="#000"/></svg>
<div style="left:361px;top:85px;width:1px;height:22px;background:#8a8a8a"></div>
<div style="left:362px;top:85px;width:1px;height:22px;background:#fff"></div>
<svg style="left:0px;top:0px" width="700" height="110" shape-rendering="crispEdges"><rect x="379.5" y="91.5" width="4" height="8" fill="#d8c800" stroke="#000" stroke-width="1"/><rect x="380" y="92" width="1" height="7" fill="#fff8a0"/><ellipse cx="374" cy="97.5" rx="2.5" ry="1.5" fill="#ffff60" stroke="#000" stroke-width="1"/><ellipse cx="379.5" cy="98.5" rx="2.5" ry="1.5" fill="#ffff60" stroke="#000" stroke-width="1"/><path d="M370 97 L372 97" stroke="#000"/></svg>
<svg style="left:0px;top:0px" width="700" height="110" shape-rendering="crispEdges"><ellipse cx="397.5" cy="93.5" rx="2.5" ry="2" fill="none" stroke="#000" stroke-width="1.8"/><ellipse cx="404.5" cy="99" rx="2.5" ry="2" fill="none" stroke="#000" stroke-width="1.8"/><path d="M396 102 L406 91" stroke="#000" stroke-width="1.8"/></svg>
<svg style="left:0px;top:0px" width="700" height="110" shape-rendering="crispEdges"><text x="416.5" y="97.5" font-size="9" font-weight="bold" font-family="Liberation Sans" fill="#000">$</text><text x="424" y="98" font-size="8.5" font-weight="bold" font-family="Liberation Sans" fill="#000">%</text><rect x="421" y="100" width="7" height="1.2" fill="#000080"/><path d="M420 100.6 L423 98.6 L423 102.6 Z" fill="#000080"/></svg>
<svg style="left:0px;top:0px" width="700" height="110" shape-rendering="crispEdges"><text x="441" y="95" font-size="7" font-family="Liberation Sans" fill="#909090">0</text><path d="M446 91.5 L452.5 91.5 L452.5 95" stroke="#000080" stroke-width="1.3" fill="none"/><path d="M450.5 94.5 L454.5 94.5 L452.5 97 Z" fill="#000080"/><text x="440" y="102" font-size="8" font-weight="bold" font-family="Liberation Sans" fill="#000" letter-spacing="-0.3">.000</text></svg>
<svg style="left:0px;top:0px" width="700" height="110" shape-rendering="crispEdges"><text x="464" y="95" font-size="8" font-weight="bold" font-family="Liberation Sans" fill="#000" letter-spacing="-0.3">.00</text><text x="475" y="95" font-size="7" font-family="Liberation Sans" fill="#909090">0</text><text x="464" y="102" font-size="8" font-weight="bold" font-family="Liberation Sans" fill="#000">0</text><path d="M470 99.5 L476.5 99.5 L476.5 96" stroke="#000080" stroke-width="1.3" fill="none"/><path d="M468.5 99.5 L471.5 97.5 L471.5 101.5 Z" fill="#000080"/></svg>
<div style="left:484px;top:85px;width:1px;height:22px;background:#8a8a8a"></div>
<div style="left:485px;top:85px;width:1px;height:22px;background:#fff"></div>
<svg style="left:0px;top:0px" width="700" height="110" shape-rendering="crispEdges"><rect x="500" y="89" width="1" height="1" fill="#000"/><rect x="500" y="91" width="1" height="1" fill="#000"/><rect x="500" y="93" width="1" height="1" fill="#000"/><rect x="500" y="95" width="1" height="1" fill="#000"/><rect x="500" y="97" width="1" height="1" fill="#000"/><rect x="500" y="99" width="1" height="1" fill="#000"/><rect x="500" y="101" width="1" height="1" fill="#000"/><rect x="500" y="103" width="1" height="1" fill="#000"/><rect x="496" y="92" width="13" height="1" fill="#000"/><rect x="500" y="94" width="9" height="2" fill="#000"/><rect x="500" y="97" width="5" height="2" fill="#000"/><rect x="496" y="100" width="13" height="1" fill="#000"/><rect x="495" y="95" width="4" height="2" fill="#000080"/><path d="M492 96 L496 93 L496 99 Z" fill="#000080"/></svg>
<svg style="left:0px;top:0px" width="700" height="110" shape-rendering="crispEdges"><rect x="523" y="89" width="1" height="1" fill="#000"/><rect x="523" y="91" width="1" height="1" fill="#000"/><rect x="523" y="93" width="1" height="1" fill="#000"/><rect x="523" y="95" width="1" height="1" fill="#000"/><rect x="523" y="97" width="1" height="1" fill="#000"/><rect x="523" y="99" width="1" height="1" fill="#000"/><rect x="523" y="101" width="1" height="1" fill="#000"/><rect x="523" y="103" width="1" height="1" fill="#000"/><rect x="519" y="92" width="13" height="1" fill="#000"/><rect x="523" y="94" width="9" height="2" fill="#000"/><rect x="523" y="97" width="5" height="2" fill="#000"/><rect x="519" y="100" width="13" height="1" fill="#000"/><rect x="516" y="95" width="4" height="2" fill="#000080"/><path d="M523 96 L519 93 L519 99 Z" fill="#000080"/></svg>
<div style="left:538px;top:85px;width:1px;height:22px;background:#8a8a8a"></div>
<div style="left:539px;top:85px;width:1px;height:22px;background:#fff"></div>
<svg style="left:0px;top:0px" width="700" height="110" shape-rendering="crispEdges"><rect x="549.5" y="91.5" width="11" height="10" fill="none" stroke="#000080" stroke-width="1.2"/><path d="M556.5 88 L564.5 88 L560.5 92 Z" fill="#00d000" stroke="#000" stroke-width="0.8"/></svg>
<svg style="left:0px;top:0px" width="700" height="110" shape-rendering="crispEdges"><rect x="571" y="90" width="14" height="4" fill="#000080"/><rect x="572" y="91" width="5" height="2" fill="#fff"/><rect x="578" y="91" width="3" height="2" fill="#c0c0c0"/><rect x="571" y="94" width="2" height="6" fill="#a000a0"/><rect x="575" y="94" width="1" height="5" fill="#a000a0"/><rect x="570" y="100" width="16" height="4" fill="#c8c4c8"/><path d="M579.5 88 L587.5 88 L583.5 92 Z" fill="#00d000" stroke="#000" stroke-width="0.8"/></svg>
<div style="left:592px;top:85px;width:1px;height:22px;background:#8a8a8a"></div>
<div style="left:593px;top:85px;width:1px;height:22px;background:#fff"></div>
<svg style="left:601px;top:89px" width="16" height="16" shape-rendering="crispEdges"><rect x="1" y="0" width="1" height="16" fill="#888"/><rect x="14" y="0" width="1" height="16" fill="#888"/><rect x="0" y="2" width="16" height="1" fill="#888"/><rect x="0" y="13" width="16" height="1" fill="#888"/><rect x="2" y="3" width="12" height="10" fill="#fff"/><rect x="3" y="4" width="3" height="1" fill="#000"/><rect x="3" y="6" width="6" height="1" fill="#000"/><rect x="10" y="5" width="2" height="7" fill="#000080"/><path d="M8.5 6 L11 3 L13.5 6 Z" fill="#000080"/></svg>
<svg style="left:624px;top:89px" width="16" height="16" shape-rendering="crispEdges"><rect x="1" y="0" width="1" height="16" fill="#888"/><rect x="14" y="0" width="1" height="16" fill="#888"/><rect x="0" y="2" width="16" height="1" fill="#888"/><rect x="0" y="13" width="16" height="1" fill="#888"/><rect x="2" y="3" width="12" height="10" fill="#fff"/><rect x="3" y="6" width="3" height="1" fill="#000"/><rect x="3" y="8" width="6" height="1" fill="#000"/><rect x="10" y="5" width="2" height="6" fill="#000080"/><path d="M8.5 6 L11 3 L13.5 6 Z M8.5 10 L11 13 L13.5 10 Z" fill="#000080"/></svg>
<svg style="left:647px;top:89px" width="16" height="16" shape-rendering="crispEdges"><rect x="1" y="0" width="1" height="16" fill="#888"/><rect x="14" y="0" width="1" height="16" fill="#888"/><rect x="0" y="2" width="16" height="1" fill="#888"/><rect x="0" y="13" width="16" height="1" fill="#888"/><rect x="2" y="3" width="12" height="10" fill="#fff"/><rect x="3" y="8" width="3" height="1" fill="#000"/><rect x="3" y="10" width="6" height="1" fill="#000"/><rect x="10" y="4" width="2" height="7" fill="#000080"/><path d="M8.5 10 L11 13 L13.5 10 Z" fill="#000080"/></svg>
<div style="left:4px;top:137px;width:1015px;height:1px;background:#9a9a9a"></div>
<div style="left:4px;top:138px;width:1015px;height:1px;background:#fff"></div>
<div style="left:8px;top:114px;width:137px;height:22px;background:#fff;border-top:1px solid #9a9a9a;border-left:1px solid #9a9a9a;border-right:1px solid #fff;border-bottom:1px solid #fff;box-sizing:border-box"></div>
<div style="left:9px;top:115px;width:135px;height:20px;border-top:1px solid #000;border-left:1px solid #000;border-right:1px solid #eaeaea;border-bottom:1px solid #eaeaea;box-sizing:border-box"></div>
<div class="t" style="left:12px;top:119px;font-size:12px;color:#000">E27</div>
<div style="left:128px;top:116px;width:16px;height:18px;background:#dedede;border-top:1px solid #fff;border-left:1px solid #fff;border-right:1px solid #000;border-bottom:1px solid #000;box-sizing:border-box"></div>
<svg style="left:131px;top:122px" width="10" height="6" shape-rendering="crispEdges"><path d="M0.5 0 L8.5 0 L4.5 4.5 Z" fill="#000"/></svg>
<svg style="left:158px;top:120px" width="15" height="10" shape-rendering="crispEdges"><rect x="0.5" y="0.5" width="13" height="8" rx="1.5" fill="#fff" stroke="#000" shape-rendering="auto"/><rect x="2" y="2" width="10" height="1" fill="#000"/><rect x="2" y="4" width="2" height="1" fill="#000"/><rect x="5" y="4" width="2" height="1" fill="#000"/><rect x="8" y="4" width="4" height="1" fill="#000"/><rect x="2" y="6" width="5" height="1" fill="#000"/><rect x="8" y="6" width="4" height="1" fill="#000"/></svg>
<div class="t" style="left:181px;top:118px;font-family:'Liberation Serif',serif;font-weight:bold;font-size:16px;color:#000">&Sigma;</div>
<svg style="left:205px;top:122px" width="11" height="8" shape-rendering="crispEdges"><rect x="0" y="1" width="10" height="1" fill="#000"/><rect x="0" y="5" width="10" height="1" fill="#000"/></svg>
<div style="left:231px;top:114px;width:784px;height:22px;background:#fff;border-top:1px solid #9a9a9a;border-left:1px solid #9a9a9a;border-right:1px solid #fff;border-bottom:1px solid #fff;box-sizing:border-box"></div>
<div style="left:232px;top:115px;width:782px;height:20px;border-top:1px solid #000;border-left:1px solid #000;border-right:1px solid #eaeaea;border-bottom:1px solid #eaeaea;box-sizing:border-box"></div>
<div class="t" style="left:235px;top:119px;font-size:12px;color:#000">Material</div>
<div style="left:5px;top:139px;width:29px;height:575px;background:#dedede;border-top:1px solid #fff;border-left:1px solid #fff;box-sizing:border-box"></div>
<div style="left:9px;top:262px;width:21px;height:1px;background:#9a9a9a"></div>
<div style="left:9px;top:263px;width:21px;height:1px;background:#fff"></div>
<div style="left:9px;top:408px;width:21px;height:1px;background:#9a9a9a"></div>
<div style="left:9px;top:409px;width:21px;height:1px;background:#fff"></div>
<div style="left:9px;top:485px;width:21px;height:1px;background:#9a9a9a"></div>
<div style="left:9px;top:486px;width:21px;height:1px;background:#fff"></div>
<div style="left:34px;top:140px;width:968px;height:558px;overflow:hidden;background:#fff">
<div style="left:0px;top:0px;width:968px;height:1px;background:#000"></div>
<div style="left:0px;top:17px;width:968px;height:1px;background:#000"></div>
<div style="left:1px;top:1px;width:32px;height:16px;background:#dedede;border:1px solid #fff;box-sizing:border-box"></div>
<div style="left:33px;top:0px;width:1px;height:18px;background:#000"></div>
<div style="left:34px;top:1px;width:89px;height:16px;background:#dedede;border:1px solid #fff;box-sizing:border-box"></div>
<div style="left:123px;top:0px;width:1px;height:18px;background:#000"></div>
<div style="left:124px;top:1px;width:67px;height:16px;background:#dedede;border:1px solid #fff;box-sizing:border-box"></div>
<div style="left:191px;top:0px;width:1px;height:18px;background:#000"></div>
<div style="left:192px;top:1px;width:78px;height:16px;background:#dedede;border:1px solid #fff;box-sizing:border-box"></div>
<div style="left:270px;top:0px;width:1px;height:18px;background:#000"></div>
<div style="left:271px;top:1px;width:71px;height:16px;background:#dedede;border:1px solid #fff;box-sizing:border-box"></div>
<div style="left:342px;top:0px;width:1px;height:18px;background:#000"></div>
<div style="left:343px;top:1px;width:87px;height:16px;background:#bcbcc6;border:1px solid #fff;box-sizing:border-box"></div>
<div style="left:430px;top:0px;width:1px;height:18px;background:#000"></div>
<div style="left:431px;top:1px;width:86px;height:16px;background:#dedede;border:1px solid #fff;box-sizing:border-box"></div>
<div style="left:517px;top:0px;width:1px;height:18px;background:#000"></div>
<div style="left:518px;top:1px;width:94px;height:16px;background:#dedede;border:1px solid #fff;box-sizing:border-box"></div>
<div style="left:612px;top:0px;width:1px;height:18px;background:#000"></div>
<div style="left:613px;top:1px;width:78px;height:16px;background:#dedede;border:1px solid #fff;box-sizing:border-box"></div>
<div style="left:691px;top:0px;width:1px;height:18px;background:#000"></div>
<div style="left:692px;top:1px;width:78px;height:16px;background:#dedede;border:1px solid #fff;box-sizing:border-box"></div>
<div style="left:770px;top:0px;width:1px;height:18px;background:#000"></div>
<div style="left:771px;top:1px;width:78px;height:16px;background:#dedede;border:1px solid #fff;box-sizing:border-box"></div>
<div style="left:849px;top:0px;width:1px;height:18px;background:#000"></div>
<div style="left:850px;top:1px;width:86px;height:16px;background:#dedede;border:1px solid #fff;box-sizing:border-box"></div>
<div style="left:936px;top:0px;width:1px;height:18px;background:#000"></div>
<div style="left:937px;top:1px;width:31px;height:16px;background:#dedede;border:1px solid #fff;box-sizing:border-box"></div>
<div style="left:968px;top:0px;width:1px;height:18px;background:#000"></div>
<div style="left:937px;top:1px;width:40px;height:16px;background:#dedede;border:1px solid #fff;box-sizing:border-box"></div>
<div class="t" style="left:34px;top:4px;font-size:12px;color:#000"><div style="position:static;width:89px;text-align:center">A</div></div>
<div class="t" style="left:124px;top:4px;font-size:12px;color:#000"><div style="position:static;width:67px;text-align:center">B</div></div>
<div class="t" style="left:192px;top:4px;font-size:12px;color:#000"><div style="position:static;width:78px;text-align:center">C</div></div>
<div class="t" style="left:271px;top:4px;font-size:12px;color:#000"><div style="position:static;width:71px;text-align:center">D</div></div>
<div class="t" style="left:343px;top:4px;font-size:12px;color:#000"><div style="position:static;width:87px;text-align:center">E</div></div>
<div class="t" style="left:431px;top:4px;font-size:12px;color:#000"><div style="position:static;width:86px;text-align:center">F</div></div>
<div class="t" style="left:518px;top:4px;font-size:12px;color:#000"><div style="position:static;width:94px;text-align:center">G</div></div>
<div class="t" style="left:613px;top:4px;font-size:12px;color:#000"><div style="position:static;width:78px;text-align:center">H</div></div>
<div class="t" style="left:692px;top:4px;font-size:12px;color:#000"><div style="position:static;width:78px;text-align:center">I</div></div>
<div class="t" style="left:771px;top:4px;font-size:12px;color:#000"><div style="position:static;width:78px;text-align:center">J</div></div>
<div class="t" style="left:850px;top:4px;font-size:12px;color:#000"><div style="position:static;width:86px;text-align:center">K</div></div>
<div class="t" style="left:937px;top:4px;font-size:12px;color:#000"><div style="position:static;width:69px;text-align:center">L</div></div>
<div style="left:0px;top:0px;width:1px;height:560px;background:#000"></div>
<div style="left:33px;top:0px;width:1px;height:560px;background:#000"></div>
<div style="left:1px;top:18px;width:32px;height:15px;background:#bcbcc6;border:1px solid #fff;border-right:none;box-sizing:border-box"></div>
<div style="left:0px;top:33px;width:34px;height:1px;background:#000"></div>
<div class="t" style="left:1px;top:20px;font-size:12px;color:#000"><div style="position:static;width:32px;text-align:center">27</div></div>
<div style="left:1px;top:34px;width:32px;height:15px;background:#dedede;border:1px solid #fff;border-right:none;box-sizing:border-box"></div>
<div style="left:0px;top:49px;width:34px;height:1px;background:#000"></div>
<div class="t" style="left:1px;top:36px;font-size:12px;color:#000"><div style="position:static;width:32px;text-align:center">28</div></div>
<div style="left:1px;top:50px;width:32px;height:14px;background:#dedede;border:1px solid #fff;border-right:none;box-sizing:border-box"></div>
<div style="left:0px;top:64px;width:34px;height:1px;background:#000"></div>
<div class="t" style="left:1px;top:52px;font-size:12px;color:#000"><div style="position:static;width:32px;text-align:center">29</div></div>
<div style="left:1px;top:65px;width:32px;height:14px;background:#dedede;border:1px solid #fff;border-right:none;box-sizing:border-box"></div>
<div style="left:0px;top:79px;width:34px;height:1px;background:#000"></div>
<div class="t" style="left:1px;top:67px;font-size:12px;color:#000"><div style="position:static;width:32px;text-align:center">30</div></div>
<div style="left:1px;top:80px;width:32px;height:14px;background:#dedede;border:1px solid #fff;border-right:none;box-sizing:border-box"></div>
<div style="left:0px;top:94px;width:34px;height:1px;background:#000"></div>
<div class="t" style="left:1px;top:82px;font-size:12px;color:#000"><div style="position:static;width:32px;text-align:center">31</div></div>
<div style="left:1px;top:95px;width:32px;height:14px;background:#dedede;border:1px solid #fff;border-right:none;box-sizing:border-box"></div>
<div style="left:0px;top:109px;width:34px;height:1px;background:#000"></div>
<div class="t" style="left:1px;top:97px;font-size:12px;color:#000"><div style="position:static;width:32px;text-align:center">32</div></div>
<div style="left:1px;top:110px;width:32px;height:17px;background:#dedede;border:1px solid #fff;border-right:none;box-sizing:border-box"></div>
<div style="left:0px;top:127px;width:34px;height:1px;background:#000"></div>
<div class="t" style="left:1px;top:113px;font-size:12px;color:#000"><div style="position:static;width:32px;text-align:center">33</div></div>
<div style="left:1px;top:128px;width:32px;height:14px;background:#dedede;border:1px solid #fff;border-right:none;box-sizing:border-box"></div>
<div style="left:0px;top:142px;width:34px;height:1px;background:#000"></div>
<div class="t" style="left:1px;top:130px;font-size:12px;color:#000"><div style="position:static;width:32px;text-align:center">34</div></div>
<div style="left:1px;top:143px;width:32px;height:14px;background:#dedede;border:1px solid #fff;border-right:none;box-sizing:border-box"></div>
<div style="left:0px;top:157px;width:34px;height:1px;background:#000"></div>
<div class="t" style="left:1px;top:145px;font-size:12px;color:#000"><div style="position:static;width:32px;text-align:center">35</div></div>
<div style="left:1px;top:158px;width:32px;height:14px;background:#dedede;border:1px solid #fff;border-right:none;box-sizing:border-box"></div>
<div style="left:0px;top:172px;width:34px;height:1px;background:#000"></div>
<div class="t" style="left:1px;top:160px;font-size:12px;color:#000"><div style="position:static;width:32px;text-align:center">36</div></div>
<div style="left:1px;top:173px;width:32px;height:15px;background:#dedede;border:1px solid #fff;border-right:none;box-sizing:border-box"></div>
<div style="left:0px;top:188px;width:34px;height:1px;background:#000"></div>
<div class="t" style="left:1px;top:175px;font-size:12px;color:#000"><div style="position:static;width:32px;text-align:center">37</div></div>
<div style="left:1px;top:189px;width:32px;height:15px;background:#dedede;border:1px solid #fff;border-right:none;box-sizing:border-box"></div>
<div style="left:0px;top:204px;width:34px;height:1px;background:#000"></div>
<div class="t" style="left:1px;top:191px;font-size:12px;color:#000"><div style="position:static;width:32px;text-align:center">38</div></div>
<div style="left:1px;top:205px;width:32px;height:15px;background:#dedede;border:1px solid #fff;border-right:none;box-sizing:border-box"></div>
<div style="left:0px;top:220px;width:34px;height:1px;background:#000"></div>
<div class="t" style="left:1px;top:207px;font-size:12px;color:#000"><div style="position:static;width:32px;text-align:center">39</div></div>
<div style="left:1px;top:221px;width:32px;height:15px;background:#dedede;border:1px solid #fff;border-right:none;box-sizing:border-box"></div>
<div style="left:0px;top:236px;width:34px;height:1px;background:#000"></div>
<div class="t" style="left:1px;top:223px;font-size:12px;color:#000"><div style="position:static;width:32px;text-align:center">40</div></div>
<div style="left:1px;top:237px;width:32px;height:15px;background:#dedede;border:1px solid #fff;border-right:none;box-sizing:border-box"></div>
<div style="left:0px;top:252px;width:34px;height:1px;background:#000"></div>
<div class="t" style="left:1px;top:239px;font-size:12px;color:#000"><div style="position:static;width:32px;text-align:center">41</div></div>
<div style="left:1px;top:253px;width:32px;height:15px;background:#dedede;border:1px solid #fff;border-right:none;box-sizing:border-box"></div>
<div style="left:0px;top:268px;width:34px;height:1px;background:#000"></div>
<div class="t" style="left:1px;top:255px;font-size:12px;color:#000"><div style="position:static;width:32px;text-align:center">42</div></div>
<div style="left:1px;top:269px;width:32px;height:15px;background:#dedede;border:1px solid #fff;border-right:none;box-sizing:border-box"></div>
<div style="left:0px;top:284px;width:34px;height:1px;background:#000"></div>
<div class="t" style="left:1px;top:271px;font-size:12px;color:#000"><div style="position:static;width:32px;text-align:center">43</div></div>
<div style="left:1px;top:285px;width:32px;height:15px;background:#dedede;border:1px solid #fff;border-right:none;box-sizing:border-box"></div>
<div style="left:0px;top:300px;width:34px;height:1px;background:#000"></div>
<div class="t" style="left:1px;top:287px;font-size:12px;color:#000"><div style="position:static;width:32px;text-align:center">44</div></div>
<div style="left:1px;top:301px;width:32px;height:15px;background:#dedede;border:1px solid #fff;border-right:none;box-sizing:border-box"></div>
<div style="left:0px;top:316px;width:34px;height:1px;background:#000"></div>
<div class="t" style="left:1px;top:303px;font-size:12px;color:#000"><div style="position:static;width:32px;text-align:center">45</div></div>
<div style="left:1px;top:317px;width:32px;height:15px;background:#dedede;border:1px solid #fff;border-right:none;box-sizing:border-box"></div>
<div style="left:0px;top:332px;width:34px;height:1px;background:#000"></div>
<div class="t" style="left:1px;top:319px;font-size:12px;color:#000"><div style="position:static;width:32px;text-align:center">46</div></div>
<div style="left:1px;top:333px;width:32px;height:15px;background:#dedede;border:1px solid #fff;border-right:none;box-sizing:border-box"></div>
<div style="left:0px;top:348px;width:34px;height:1px;background:#000"></div>
<div class="t" style="left:1px;top:335px;font-size:12px;color:#000"><div style="position:static;width:32px;text-align:center">47</div></div>
<div style="left:1px;top:349px;width:32px;height:15px;background:#dedede;border:1px solid #fff;border-right:none;box-sizing:border-box"></div>
<div style="left:0px;top:364px;width:34px;height:1px;background:#000"></div>
<div class="t" style="left:1px;top:351px;font-size:12px;color:#000"><div style="position:static;width:32px;text-align:center">48</div></div>
<div style="left:1px;top:365px;width:32px;height:15px;background:#dedede;border:1px solid #fff;border-right:none;box-sizing:border-box"></div>
<div style="left:0px;top:380px;width:34px;height:1px;background:#000"></div>
<div class="t" style="left:1px;top:367px;font-size:12px;color:#000"><div style="position:static;width:32px;text-align:center">49</div></div>
<div style="left:1px;top:381px;width:32px;height:15px;background:#dedede;border:1px solid #fff;border-right:none;box-sizing:border-box"></div>
<div style="left:0px;top:396px;width:34px;height:1px;background:#000"></div>
<div class="t" style="left:1px;top:383px;font-size:12px;color:#000"><div style="position:static;width:32px;text-align:center">50</div></div>
<div style="left:1px;top:397px;width:32px;height:15px;background:#dedede;border:1px solid #fff;border-right:none;box-sizing:border-box"></div>
<div style="left:0px;top:412px;width:34px;height:1px;background:#000"></div>
<div class="t" style="left:1px;top:399px;font-size:12px;color:#000"><div style="position:static;width:32px;text-align:center">51</div></div>
<div style="left:1px;top:413px;width:32px;height:15px;background:#dedede;border:1px solid #fff;border-right:none;box-sizing:border-box"></div>
<div style="left:0px;top:428px;width:34px;height:1px;background:#000"></div>
<div class="t" style="left:1px;top:415px;font-size:12px;color:#000"><div style="position:static;width:32px;text-align:center">52</div></div>
<div style="left:1px;top:429px;width:32px;height:14px;background:#dedede;border:1px solid #fff;border-right:none;box-sizing:border-box"></div>
<div style="left:0px;top:443px;width:34px;height:1px;background:#000"></div>
<div class="t" style="left:1px;top:431px;font-size:12px;color:#000"><div style="position:static;width:32px;text-align:center">53</div></div>
<div style="left:1px;top:444px;width:32px;height:14px;background:#dedede;border:1px solid #fff;border-right:none;box-sizing:border-box"></div>
<div style="left:0px;top:458px;width:34px;height:1px;background:#000"></div>
<div class="t" style="left:1px;top:446px;font-size:12px;color:#000"><div style="position:static;width:32px;text-align:center">54</div></div>
<div style="left:1px;top:459px;width:32px;height:14px;background:#dedede;border:1px solid #fff;border-right:none;box-sizing:border-box"></div>
<div style="left:0px;top:473px;width:34px;height:1px;background:#000"></div>
<div class="t" style="left:1px;top:461px;font-size:12px;color:#000"><div style="position:static;width:32px;text-align:center">55</div></div>
<div style="left:1px;top:474px;width:32px;height:14px;background:#dedede;border:1px solid #fff;border-right:none;box-sizing:border-box"></div>
<div style="left:0px;top:488px;width:34px;height:1px;background:#000"></div>
<div class="t" style="left:1px;top:476px;font-size:12px;color:#000"><div style="position:static;width:32px;text-align:center">56</div></div>
<div style="left:1px;top:489px;width:32px;height:14px;background:#dedede;border:1px solid #fff;border-right:none;box-sizing:border-box"></div>
<div style="left:0px;top:503px;width:34px;height:1px;background:#000"></div>
<div class="t" style="left:1px;top:491px;font-size:12px;color:#000"><div style="position:static;width:32px;text-align:center">57</div></div>
<div style="left:1px;top:504px;width:32px;height:14px;background:#dedede;border:1px solid #fff;border-right:none;box-sizing:border-box"></div>
<div style="left:0px;top:518px;width:34px;height:1px;background:#000"></div>
<div class="t" style="left:1px;top:506px;font-size:12px;color:#000"><div style="position:static;width:32px;text-align:center">58</div></div>
<div style="left:1px;top:519px;width:32px;height:14px;background:#dedede;border:1px solid #fff;border-right:none;box-sizing:border-box"></div>
<div style="left:0px;top:533px;width:34px;height:1px;background:#000"></div>
<div class="t" style="left:1px;top:521px;font-size:12px;color:#000"><div style="position:static;width:32px;text-align:center">59</div></div>
<div style="left:1px;top:534px;width:32px;height:15px;background:#dedede;border:1px solid #fff;border-right:none;box-sizing:border-box"></div>
<div style="left:0px;top:549px;width:34px;height:1px;background:#000"></div>
<div class="t" style="left:1px;top:536px;font-size:12px;color:#000"><div style="position:static;width:32px;text-align:center">60</div></div>
<div style="left:1px;top:550px;width:32px;height:15px;background:#dedede;border:1px solid #fff;border-right:none;box-sizing:border-box"></div>
<div style="left:0px;top:565px;width:34px;height:1px;background:#000"></div>
<div class="t" style="left:1px;top:552px;font-size:12px;color:#000"><div style="position:static;width:32px;text-align:center">61</div></div>
<div style="left:124px;top:18px;width:218px;height:31px;background:#ffff80"></div>
<div style="left:343px;top:18px;width:506px;height:15px;background:#c8c4c8"></div>
<div style="left:343px;top:34px;width:348px;height:15px;background:#c8c4c8"></div>
<div style="left:692px;top:34px;width:157px;height:15px;background:#ffff80"></div>
<div style="left:850px;top:18px;width:173px;height:31px;background:#c8c4c8"></div>
<div style="left:430px;top:32px;width:421px;height:3px;background:#000"></div>
<div style="left:343px;top:32px;width:87px;height:3px;background:#3c3c3c"></div>
<div style="left:33px;top:17px;width:935px;height:2px;background:#000"></div>
<div style="left:33px;top:48px;width:937px;height:3px;background:#000"></div>
<div style="left:33px;top:16px;width:2px;height:34px;background:#000"></div>
<div style="left:123px;top:16px;width:2px;height:34px;background:#000"></div>
<div style="left:342px;top:16px;width:2px;height:34px;background:#000"></div>
<div style="left:430px;top:16px;width:2px;height:34px;background:#000"></div>
<div style="left:849px;top:16px;width:2px;height:34px;background:#000"></div>
<div style="left:936px;top:16px;width:2px;height:34px;background:#000"></div>
<div class="t" style="left:35px;width:88px;top:20.69px;font-size:11px;text-align:center;font-weight:bold;color:#000080">Gemein-</div>
<div class="t" style="left:35px;width:88px;top:36.69px;font-size:11px;text-align:center;font-weight:bold;color:#000080">kosten</div>
<div class="t" style="left:125px;width:66px;top:20.69px;font-size:11px;text-align:center;color:#000">I</div>
<div class="t" style="left:193px;width:77px;top:20.69px;font-size:11px;text-align:center;color:#000">II</div>
<div class="t" style="left:272px;width:70px;top:20.69px;font-size:11px;text-align:center;color:#000">III</div>
<div class="t" style="left:344px;width:86px;top:20.69px;font-size:11px;text-align:center;font-weight:bold;color:#000">Material</div>
<div class="t" style="left:432px;width:417px;top:20.69px;font-size:11px;text-align:center;font-weight:bold;color:#000">Fertigung</div>
<div class="t" style="left:432px;width:85px;top:36.69px;font-size:11px;text-align:center;font-weight:bold;color:#000">[A]</div>
<div class="t" style="left:519px;width:93px;top:36.69px;font-size:11px;text-align:center;font-weight:bold;color:#000">[B]</div>
<div class="t" style="left:614px;width:77px;top:36.69px;font-size:11px;text-align:center;font-weight:bold;color:#000">[C]</div>
<div class="t" style="left:693px;width:77px;top:36.69px;font-size:11px;text-align:center;color:#000">IV</div>
<div class="t" style="left:772px;width:77px;top:36.69px;font-size:11px;text-align:center;color:#000">V</div>
<div class="t" style="left:851px;width:85px;top:20.69px;font-size:11px;text-align:center;font-weight:bold;color:#000">Verwaltung</div>
<div class="t" style="left:938px;width:85px;top:20.69px;font-size:11px;text-align:center;font-weight:bold;color:#000">Vertrieb</div>
<div class="t" style="right:867px;top:53.53px;font-size:10px;text-align:right;color:#000080;letter-spacing:-0.45px">483.560,00</div>
<div class="t" style="right:867px;top:68.53px;font-size:10px;text-align:right;color:#000080;letter-spacing:-0.45px">293.475,00</div>
<div class="t" style="right:867px;top:83.53px;font-size:10px;text-align:right;color:#000080;letter-spacing:-0.45px">333.456,00</div>
<div class="t" style="right:867px;top:98.53px;font-size:10px;text-align:right;color:#000080;letter-spacing:-0.45px">670.208,00</div>
<div class="t" style="right:867px;top:116.54px;font-size:10px;text-align:right;color:#000080;letter-spacing:-0.45px">974.350,00</div>
<div class="t" style="right:867px;top:131.54px;font-size:10px;text-align:right;color:#000080;letter-spacing:-0.45px">56.777,00</div>
<div class="t" style="right:867px;top:146.54px;font-size:10px;text-align:right;color:#000080;letter-spacing:-0.45px">123.456,00</div>
<div class="t" style="right:867px;top:161.54px;font-size:10px;text-align:right;color:#000080;letter-spacing:-0.45px">60.987,00</div>
<div class="t" style="right:867px;top:177.54px;font-size:10px;text-align:right;color:#000080;letter-spacing:-0.45px">126.789,00</div>
<div class="t" style="right:799px;top:53.53px;font-size:10px;text-align:right;color:#000;letter-spacing:-0.45px">3.609</div>
<div class="t" style="right:799px;top:68.53px;font-size:10px;text-align:right;color:#000;letter-spacing:-0.45px">19.829</div>
<div class="t" style="right:799px;top:83.53px;font-size:10px;text-align:right;color:#000;letter-spacing:-0.45px">23.400</div>
<div class="t" style="right:799px;top:98.53px;font-size:10px;text-align:right;color:#000;letter-spacing:-0.45px">102.322</div>
<div class="t" style="right:799px;top:116.54px;font-size:10px;text-align:right;color:#000;letter-spacing:-0.45px">157.789</div>
<div class="t" style="right:799px;top:131.54px;font-size:10px;text-align:right;color:#000;letter-spacing:-0.45px">143</div>
<div class="t" style="right:799px;top:146.54px;font-size:10px;text-align:right;color:#000;letter-spacing:-0.45px">214</div>
<div class="t" style="right:799px;top:161.54px;font-size:10px;text-align:right;color:#000;letter-spacing:-0.45px">2.459</div>
<div class="t" style="right:799px;top:177.54px;font-size:10px;text-align:right;color:#000;letter-spacing:-0.45px">2.087</div>
<div class="t" style="right:720px;top:53.53px;font-size:10px;text-align:right;color:#000;letter-spacing:-0.45px">2.406</div>
<div class="t" style="right:720px;top:68.53px;font-size:10px;text-align:right;color:#000;letter-spacing:-0.45px">15.864</div>
<div class="t" style="right:720px;top:83.53px;font-size:10px;text-align:right;color:#000;letter-spacing:-0.45px">23.400</div>
<div class="t" style="right:720px;top:98.53px;font-size:10px;text-align:right;color:#000;letter-spacing:-0.45px">71.625</div>
<div class="t" style="right:720px;top:116.54px;font-size:10px;text-align:right;color:#000;letter-spacing:-0.45px">78.895</div>
<div class="t" style="right:720px;top:131.54px;font-size:10px;text-align:right;color:#000;letter-spacing:-0.45px">7</div>
<div class="t" style="right:720px;top:146.54px;font-size:10px;text-align:right;color:#000;letter-spacing:-0.45px">143</div>
<div class="t" style="right:720px;top:161.54px;font-size:10px;text-align:right;color:#000;letter-spacing:-0.45px">4.426</div>
<div class="t" style="right:720px;top:177.54px;font-size:10px;text-align:right;color:#000;letter-spacing:-0.45px">522</div>
<div class="t" style="right:648px;top:53.53px;font-size:10px;text-align:right;color:#000;letter-spacing:-0.45px">7.217</div>
<div class="t" style="right:648px;top:68.53px;font-size:10px;text-align:right;color:#000;letter-spacing:-0.45px">11.898</div>
<div class="t" style="right:648px;top:83.53px;font-size:10px;text-align:right;color:#000;letter-spacing:-0.45px">23.400</div>
<div class="t" style="right:648px;top:98.53px;font-size:10px;text-align:right;color:#000;letter-spacing:-0.45px">40.929</div>
<div class="t" style="right:648px;top:116.54px;font-size:10px;text-align:right;color:#000;letter-spacing:-0.45px">3.945</div>
<div class="t" style="right:648px;top:131.54px;font-size:10px;text-align:right;color:#000;letter-spacing:-0.45px">20</div>
<div class="t" style="right:648px;top:146.54px;font-size:10px;text-align:right;color:#000;letter-spacing:-0.45px">107</div>
<div class="t" style="right:648px;top:161.54px;font-size:10px;text-align:right;color:#000;letter-spacing:-0.45px">1.967</div>
<div class="t" style="right:648px;top:177.54px;font-size:10px;text-align:right;color:#000;letter-spacing:-0.45px">1.044</div>
<div class="t" style="right:560px;top:53.53px;font-size:10px;text-align:right;color:#000;letter-spacing:-0.45px">236.968</div>
<div class="t" style="right:560px;top:68.53px;font-size:10px;text-align:right;color:#000;letter-spacing:-0.45px">35.693</div>
<div class="t" style="right:560px;top:83.53px;font-size:10px;text-align:right;color:#000;letter-spacing:-0.45px">35.101</div>
<div class="t" style="right:560px;top:98.53px;font-size:10px;text-align:right;color:#000;letter-spacing:-0.45px">51.161</div>
<div class="t" style="right:560px;top:116.54px;font-size:10px;text-align:right;color:#000;letter-spacing:-0.45px">59.171</div>
<div class="t" style="right:560px;top:131.54px;font-size:10px;text-align:right;color:#000;letter-spacing:-0.45px">6.507</div>
<div class="t" style="right:560px;top:146.54px;font-size:10px;text-align:right;color:#000;letter-spacing:-0.45px">107</div>
<div class="t" style="right:560px;top:161.54px;font-size:10px;text-align:right;color:#000;letter-spacing:-0.45px">37.871</div>
<div class="t" style="right:560px;top:177.54px;font-size:10px;text-align:right;color:#000;letter-spacing:-0.45px">34.437</div>
<div class="t" style="right:473px;top:53.53px;font-size:10px;text-align:right;color:#000;letter-spacing:-0.45px">32.478</div>
<div class="t" style="right:473px;top:68.53px;font-size:10px;text-align:right;color:#000;letter-spacing:-0.45px">43.625</div>
<div class="t" style="right:473px;top:83.53px;font-size:10px;text-align:right;color:#000;letter-spacing:-0.45px">58.501</div>
<div class="t" style="right:473px;top:98.53px;font-size:10px;text-align:right;color:#000;letter-spacing:-0.45px">40.929</div>
<div class="t" style="right:473px;top:116.54px;font-size:10px;text-align:right;color:#000;letter-spacing:-0.45px">74.950</div>
<div class="t" style="right:473px;top:131.54px;font-size:10px;text-align:right;color:#000;letter-spacing:-0.45px">36.871</div>
<div class="t" style="right:473px;top:146.54px;font-size:10px;text-align:right;color:#000;letter-spacing:-0.45px">85.535</div>
<div class="t" style="right:480px;top:161.54px;font-size:10px;text-align:right;color:#000;letter-spacing:-0.45px">-</div>
<div class="t" style="right:473px;top:177.54px;font-size:10px;text-align:right;color:#000;letter-spacing:-0.45px">4.174</div>
<div class="t" style="right:378px;top:53.53px;font-size:10px;text-align:right;color:#000;letter-spacing:-0.45px">46.913</div>
<div class="t" style="right:378px;top:68.53px;font-size:10px;text-align:right;color:#000;letter-spacing:-0.45px">47.591</div>
<div class="t" style="right:378px;top:83.53px;font-size:10px;text-align:right;color:#000;letter-spacing:-0.45px">87.752</div>
<div class="t" style="right:378px;top:98.53px;font-size:10px;text-align:right;color:#000;letter-spacing:-0.45px">40.929</div>
<div class="t" style="right:378px;top:116.54px;font-size:10px;text-align:right;color:#000;letter-spacing:-0.45px">71.005</div>
<div class="t" style="right:378px;top:131.54px;font-size:10px;text-align:right;color:#000;letter-spacing:-0.45px">13</div>
<div class="t" style="right:378px;top:146.54px;font-size:10px;text-align:right;color:#000;letter-spacing:-0.45px">1.960</div>
<div class="t" style="right:378px;top:161.54px;font-size:10px;text-align:right;color:#000;letter-spacing:-0.45px">1.475</div>
<div class="t" style="right:378px;top:177.54px;font-size:10px;text-align:right;color:#000;letter-spacing:-0.45px">29.219</div>
<div class="t" style="right:299px;top:53.53px;font-size:10px;text-align:right;color:#000;letter-spacing:-0.45px">34.884</div>
<div class="t" style="right:299px;top:68.53px;font-size:10px;text-align:right;color:#000;letter-spacing:-0.45px">55.522</div>
<div class="t" style="right:299px;top:83.53px;font-size:10px;text-align:right;color:#000;letter-spacing:-0.45px">23.400</div>
<div class="t" style="right:299px;top:98.53px;font-size:10px;text-align:right;color:#000;letter-spacing:-0.45px">30.697</div>
<div class="t" style="right:299px;top:116.54px;font-size:10px;text-align:right;color:#000;letter-spacing:-0.45px">67.061</div>
<div class="t" style="right:299px;top:131.54px;font-size:10px;text-align:right;color:#000;letter-spacing:-0.45px">20</div>
<div class="t" style="right:299px;top:146.54px;font-size:10px;text-align:right;color:#000;letter-spacing:-0.45px">3.136</div>
<div class="t" style="right:299px;top:161.54px;font-size:10px;text-align:right;color:#000;letter-spacing:-0.45px">1.967</div>
<div class="t" style="right:299px;top:177.54px;font-size:10px;text-align:right;color:#000;letter-spacing:-0.45px">2.087</div>
<div class="t" style="right:220px;top:53.53px;font-size:10px;text-align:right;color:#000;letter-spacing:-0.45px">40.898</div>
<div class="t" style="right:220px;top:68.53px;font-size:10px;text-align:right;color:#000;letter-spacing:-0.45px">15.864</div>
<div class="t" style="right:220px;top:83.53px;font-size:10px;text-align:right;color:#000;letter-spacing:-0.45px">5.850</div>
<div class="t" style="right:220px;top:98.53px;font-size:10px;text-align:right;color:#000;letter-spacing:-0.45px">51.161</div>
<div class="t" style="right:220px;top:116.54px;font-size:10px;text-align:right;color:#000;letter-spacing:-0.45px">35.503</div>
<div class="t" style="right:220px;top:131.54px;font-size:10px;text-align:right;color:#000;letter-spacing:-0.45px">17</div>
<div class="t" style="right:220px;top:146.54px;font-size:10px;text-align:right;color:#000;letter-spacing:-0.45px">2.744</div>
<div class="t" style="right:220px;top:161.54px;font-size:10px;text-align:right;color:#000;letter-spacing:-0.45px">2.951</div>
<div class="t" style="right:220px;top:177.54px;font-size:10px;text-align:right;color:#000;letter-spacing:-0.45px">28.697</div>
<div class="t" style="right:141px;top:53.53px;font-size:10px;text-align:right;color:#000;letter-spacing:-0.45px">66.159</div>
<div class="t" style="right:141px;top:68.53px;font-size:10px;text-align:right;color:#000;letter-spacing:-0.45px">7.932</div>
<div class="t" style="right:141px;top:83.53px;font-size:10px;text-align:right;color:#000;letter-spacing:-0.45px">23.400</div>
<div class="t" style="right:141px;top:98.53px;font-size:10px;text-align:right;color:#000;letter-spacing:-0.45px">25.580</div>
<div class="t" style="right:141px;top:116.54px;font-size:10px;text-align:right;color:#000;letter-spacing:-0.45px">347.137</div>
<div class="t" style="right:141px;top:131.54px;font-size:10px;text-align:right;color:#000;letter-spacing:-0.45px">167</div>
<div class="t" style="right:141px;top:146.54px;font-size:10px;text-align:right;color:#000;letter-spacing:-0.45px">285</div>
<div class="t" style="right:141px;top:161.54px;font-size:10px;text-align:right;color:#000;letter-spacing:-0.45px">4.426</div>
<div class="t" style="right:141px;top:177.54px;font-size:10px;text-align:right;color:#000;letter-spacing:-0.45px">17.218</div>
<div class="t" style="right:54px;top:53.53px;font-size:10px;text-align:right;color:#000;letter-spacing:-0.45px">3.609</div>
<div class="t" style="right:54px;top:68.53px;font-size:10px;text-align:right;color:#000;letter-spacing:-0.45px">27.761</div>
<div class="t" style="right:54px;top:83.53px;font-size:10px;text-align:right;color:#000;letter-spacing:-0.45px">11.700</div>
<div class="t" style="right:54px;top:98.53px;font-size:10px;text-align:right;color:#000;letter-spacing:-0.45px">127.902</div>
<div class="t" style="right:54px;top:116.54px;font-size:10px;text-align:right;color:#000;letter-spacing:-0.45px">31.558</div>
<div class="t" style="right:54px;top:131.54px;font-size:10px;text-align:right;color:#000;letter-spacing:-0.45px">2.169</div>
<div class="t" style="right:54px;top:146.54px;font-size:10px;text-align:right;color:#000;letter-spacing:-0.45px">17.463</div>
<div class="t" style="right:54px;top:161.54px;font-size:10px;text-align:right;color:#000;letter-spacing:-0.45px">984</div>
<div class="t" style="right:54px;top:177.54px;font-size:10px;text-align:right;color:#000;letter-spacing:-0.45px">4.174</div>
<div style="left:33px;top:48px;width:2px;height:141px;background:#000"></div>
<div style="left:123px;top:48px;width:2px;height:141px;background:#000"></div>
<div style="left:342px;top:48px;width:2px;height:141px;background:#000"></div>
<div style="left:430px;top:48px;width:2px;height:141px;background:#000"></div>
<div style="left:691px;top:48px;width:2px;height:141px;background:#000"></div>
<div style="left:849px;top:48px;width:2px;height:141px;background:#000"></div>
<div style="left:936px;top:48px;width:2px;height:141px;background:#000"></div>
<div style="left:33px;top:187px;width:937px;height:3px;background:#000"></div>
<div style="left:33px;top:203px;width:937px;height:3px;background:#000"></div>
<div style="left:33px;top:187px;width:2px;height:18px;background:#000"></div>
<div style="left:123px;top:187px;width:2px;height:18px;background:#000"></div>
<div class="t" style="right:867px;top:193.54px;font-size:10px;text-align:right;color:#000080;letter-spacing:-0.45px">3.123.058,00</div>
<div class="t" style="right:799px;top:193.54px;font-size:10px;text-align:right;font-weight:bold;color:#000;letter-spacing:0.1px">311.853</div>
<div class="t" style="right:720px;top:193.54px;font-size:10px;text-align:right;font-weight:bold;color:#000;letter-spacing:0.1px">197.287</div>
<div class="t" style="right:648px;top:193.54px;font-size:10px;text-align:right;font-weight:bold;color:#000;letter-spacing:0.1px">90.526</div>
<div class="t" style="right:560px;top:193.54px;font-size:10px;text-align:right;font-weight:bold;color:#000;letter-spacing:0.1px">497.015</div>
<div class="t" style="right:473px;top:193.54px;font-size:10px;text-align:right;font-weight:bold;color:#000;letter-spacing:0.1px">377.063</div>
<div class="t" style="right:378px;top:193.54px;font-size:10px;text-align:right;font-weight:bold;color:#000;letter-spacing:0.1px">326.856</div>
<div class="t" style="right:299px;top:193.54px;font-size:10px;text-align:right;font-weight:bold;color:#000;letter-spacing:0.1px">218.774</div>
<div class="t" style="right:220px;top:193.54px;font-size:10px;text-align:right;font-weight:bold;color:#000;letter-spacing:0.1px">183.685</div>
<div class="t" style="right:141px;top:193.54px;font-size:10px;text-align:right;font-weight:bold;color:#000;letter-spacing:0.1px">492.305</div>
<div class="t" style="right:54px;top:193.54px;font-size:10px;text-align:right;font-weight:bold;color:#000;letter-spacing:0.1px">227.320</div>
<div class="t" style="right:-34px;top:193.54px;font-size:10px;text-align:right;font-weight:bold;color:#000;letter-spacing:0.1px">227.320</div>
<div class="t" style="right:720px;top:209.54px;font-size:10px;text-align:right;color:#000;letter-spacing:-0.45px">3.145</div>
<div class="t" style="right:648px;top:209.54px;font-size:10px;text-align:right;color:#000;letter-spacing:-0.45px">1.258</div>
<div class="t" style="right:560px;top:209.54px;font-size:10px;text-align:right;color:#000;letter-spacing:-0.45px">6.919</div>
<div class="t" style="right:473px;top:209.54px;font-size:10px;text-align:right;color:#000;letter-spacing:-0.45px">88.063</div>
<div class="t" style="right:378px;top:209.54px;font-size:10px;text-align:right;color:#000;letter-spacing:-0.45px">69.193</div>
<div class="t" style="right:299px;top:209.54px;font-size:10px;text-align:right;color:#000;letter-spacing:-0.45px">90.579</div>
<div class="t" style="right:220px;top:209.54px;font-size:10px;text-align:right;color:#000;letter-spacing:-0.45px">3.774</div>
<div class="t" style="right:141px;top:209.54px;font-size:10px;text-align:right;color:#000;letter-spacing:-0.45px">1.573</div>
<div class="t" style="right:54px;top:209.54px;font-size:10px;text-align:right;color:#000;letter-spacing:-0.45px">34.768</div>
<div class="t" style="right:720px;top:225.54px;font-size:10px;text-align:right;color:#000;letter-spacing:-0.45px">200.432</div>
<div class="t" style="right:648px;top:225.54px;font-size:10px;text-align:right;color:#000;letter-spacing:-0.45px">91.784</div>
<div class="t" style="right:560px;top:225.54px;font-size:10px;text-align:right;color:#000;letter-spacing:-0.45px">503.934</div>
<div class="t" style="right:473px;top:225.54px;font-size:10px;text-align:right;color:#000;letter-spacing:-0.45px">465.126</div>
<div class="t" style="right:378px;top:225.54px;font-size:10px;text-align:right;color:#000;letter-spacing:-0.45px">396.049</div>
<div class="t" style="right:299px;top:225.54px;font-size:10px;text-align:right;color:#000;letter-spacing:-0.45px">309.353</div>
<div class="t" style="right:220px;top:225.54px;font-size:10px;text-align:right;color:#000;letter-spacing:-0.45px">187.459</div>
<div class="t" style="right:141px;top:225.54px;font-size:10px;text-align:right;color:#000;letter-spacing:-0.45px">493.878</div>
<div class="t" style="right:54px;top:225.54px;font-size:10px;text-align:right;color:#000;letter-spacing:-0.45px">262.088</div>
<div class="t" style="right:648px;top:241.54px;font-size:10px;text-align:right;color:#000;letter-spacing:-0.45px">1.015</div>
<div class="t" style="right:560px;top:241.54px;font-size:10px;text-align:right;color:#000;letter-spacing:-0.45px">2.769</div>
<div class="t" style="right:473px;top:241.54px;font-size:10px;text-align:right;color:#000;letter-spacing:-0.45px">73.844</div>
<div class="t" style="right:378px;top:241.54px;font-size:10px;text-align:right;color:#000;letter-spacing:-0.45px">59.537</div>
<div class="t" style="right:299px;top:241.54px;font-size:10px;text-align:right;color:#000;letter-spacing:-0.45px">46.614</div>
<div class="t" style="right:220px;top:241.54px;font-size:10px;text-align:right;color:#000;letter-spacing:-0.45px">11.077</div>
<div class="t" style="right:141px;top:241.54px;font-size:10px;text-align:right;color:#000;letter-spacing:-0.45px">37</div>
<div class="t" style="right:54px;top:241.54px;font-size:10px;text-align:right;color:#000;letter-spacing:-0.45px">4.615</div>
<div class="t" style="right:648px;top:257.54px;font-size:10px;text-align:right;color:#000;letter-spacing:-0.45px">92.800</div>
<div class="t" style="right:560px;top:257.54px;font-size:10px;text-align:right;color:#000;letter-spacing:-0.45px">506.703</div>
<div class="t" style="right:473px;top:257.54px;font-size:10px;text-align:right;color:#000;letter-spacing:-0.45px">538.971</div>
<div class="t" style="right:378px;top:257.54px;font-size:10px;text-align:right;color:#000;letter-spacing:-0.45px">455.586</div>
<div class="t" style="right:299px;top:257.54px;font-size:10px;text-align:right;color:#000;letter-spacing:-0.45px">355.967</div>
<div class="t" style="right:220px;top:257.54px;font-size:10px;text-align:right;color:#000;letter-spacing:-0.45px">198.536</div>
<div class="t" style="right:141px;top:257.54px;font-size:10px;text-align:right;color:#000;letter-spacing:-0.45px">493.915</div>
<div class="t" style="right:54px;top:257.54px;font-size:10px;text-align:right;color:#000;letter-spacing:-0.45px">266.703</div>
<div class="t" style="right:560px;top:273.54px;font-size:10px;text-align:right;color:#000;letter-spacing:-0.45px">10.311</div>
<div class="t" style="right:473px;top:273.54px;font-size:10px;text-align:right;color:#000;letter-spacing:-0.45px">12.889</div>
<div class="t" style="right:378px;top:273.54px;font-size:10px;text-align:right;color:#000;letter-spacing:-0.45px">15.467</div>
<div class="t" style="right:299px;top:273.54px;font-size:10px;text-align:right;color:#000;letter-spacing:-0.45px">18.044</div>
<div class="t" style="right:220px;top:273.54px;font-size:10px;text-align:right;color:#000;letter-spacing:-0.45px">20.622</div>
<div class="t" style="right:141px;top:273.54px;font-size:10px;text-align:right;color:#000;letter-spacing:-0.45px">2.578</div>
<div class="t" style="right:54px;top:273.54px;font-size:10px;text-align:right;color:#000;letter-spacing:-0.45px">5.156</div>
<div class="t" style="right:560px;top:289.54px;font-size:10px;text-align:right;color:#000;letter-spacing:-0.45px">517.014</div>
<div class="t" style="right:473px;top:289.54px;font-size:10px;text-align:right;color:#000;letter-spacing:-0.45px">551.859</div>
<div class="t" style="right:378px;top:289.54px;font-size:10px;text-align:right;color:#000;letter-spacing:-0.45px">471.052</div>
<div class="t" style="right:299px;top:289.54px;font-size:10px;text-align:right;color:#000;letter-spacing:-0.45px">374.012</div>
<div class="t" style="right:220px;top:289.54px;font-size:10px;text-align:right;color:#000;letter-spacing:-0.45px">219.158</div>
<div class="t" style="right:141px;top:289.54px;font-size:10px;text-align:right;color:#000;letter-spacing:-0.45px">496.492</div>
<div class="t" style="right:54px;top:289.54px;font-size:10px;text-align:right;color:#000;letter-spacing:-0.45px">271.859</div>
<div class="t" style="right:-32px;top:289.54px;font-size:10px;text-align:right;color:#000;letter-spacing:-0.45px">271.859</div>
<div class="t" style="right:473px;top:305.54px;font-size:10px;text-align:right;color:#000;letter-spacing:-0.45px">227.802</div>
<div class="t" style="right:378px;top:305.54px;font-size:10px;text-align:right;color:#000;letter-spacing:-0.45px">96.378</div>
<div class="t" style="right:299px;top:305.54px;font-size:10px;text-align:right;color:#000;letter-spacing:-0.45px">11.682</div>
<div class="t" style="right:220px;top:305.54px;font-size:10px;text-align:right;color:#000;letter-spacing:-0.45px">160.630</div>
<div class="t" style="right:560px;top:321.54px;font-size:10px;text-align:right;color:#000;letter-spacing:-0.45px">517.014</div>
<div class="t" style="right:473px;top:321.54px;font-size:10px;text-align:right;color:#000;letter-spacing:-0.45px">779.662</div>
<div class="t" style="right:378px;top:321.54px;font-size:10px;text-align:right;color:#000;letter-spacing:-0.45px">567.430</div>
<div class="t" style="right:299px;top:321.54px;font-size:10px;text-align:right;color:#000;letter-spacing:-0.45px">385.694</div>
<div class="t" style="right:220px;top:321.54px;font-size:10px;text-align:right;color:#000;letter-spacing:-0.45px">379.788</div>
<div class="t" style="right:54px;top:321.54px;font-size:10px;text-align:right;color:#000;letter-spacing:-0.45px">271.859</div>
<div class="t" style="right:-32px;top:321.54px;font-size:10px;text-align:right;color:#000;letter-spacing:-0.45px">271.859</div>
<div class="t" style="right:473px;top:337.54px;font-size:10px;text-align:right;color:#000;letter-spacing:-0.45px">111.855</div>
<div class="t" style="right:378px;top:337.54px;font-size:10px;text-align:right;color:#000;letter-spacing:-0.45px">175.847</div>
<div class="t" style="right:299px;top:337.54px;font-size:10px;text-align:right;color:#000;letter-spacing:-0.45px">92.086</div>
<div style="left:191px;top:203px;width:834px;height:3px;background:#000"></div>
<div style="left:191px;top:219px;width:834px;height:3px;background:#000"></div>
<div style="left:191px;top:219px;width:834px;height:3px;background:#000"></div>
<div style="left:191px;top:235px;width:834px;height:3px;background:#000"></div>
<div style="left:191px;top:203px;width:2px;height:34px;background:#000"></div>
<div style="left:270px;top:203px;width:2px;height:34px;background:#000"></div>
<div style="left:342px;top:203px;width:2px;height:34px;background:#000"></div>
<div style="left:430px;top:203px;width:2px;height:34px;background:#000"></div>
<div style="left:517px;top:203px;width:2px;height:34px;background:#000"></div>
<div style="left:612px;top:203px;width:2px;height:34px;background:#000"></div>
<div style="left:691px;top:203px;width:2px;height:34px;background:#000"></div>
<div style="left:770px;top:203px;width:2px;height:34px;background:#000"></div>
<div style="left:849px;top:203px;width:2px;height:34px;background:#000"></div>
<div style="left:936px;top:203px;width:2px;height:34px;background:#000"></div>
<div style="left:1023px;top:203px;width:2px;height:34px;background:#000"></div>
<div style="left:270px;top:235px;width:755px;height:3px;background:#000"></div>
<div style="left:270px;top:251px;width:755px;height:3px;background:#000"></div>
<div style="left:270px;top:251px;width:755px;height:3px;background:#000"></div>
<div style="left:270px;top:267px;width:755px;height:3px;background:#000"></div>
<div style="left:270px;top:235px;width:2px;height:34px;background:#000"></div>
<div style="left:342px;top:235px;width:2px;height:34px;background:#000"></div>
<div style="left:430px;top:235px;width:2px;height:34px;background:#000"></div>
<div style="left:517px;top:235px;width:2px;height:34px;background:#000"></div>
<div style="left:612px;top:235px;width:2px;height:34px;background:#000"></div>
<div style="left:691px;top:235px;width:2px;height:34px;background:#000"></div>
<div style="left:770px;top:235px;width:2px;height:34px;background:#000"></div>
<div style="left:849px;top:235px;width:2px;height:34px;background:#000"></div>
<div style="left:936px;top:235px;width:2px;height:34px;background:#000"></div>
<div style="left:1023px;top:235px;width:2px;height:34px;background:#000"></div>
<div style="left:342px;top:267px;width:683px;height:3px;background:#000"></div>
<div style="left:342px;top:283px;width:683px;height:3px;background:#000"></div>
<div style="left:342px;top:283px;width:683px;height:3px;background:#000"></div>
<div style="left:342px;top:299px;width:683px;height:3px;background:#000"></div>
<div style="left:342px;top:267px;width:2px;height:34px;background:#000"></div>
<div style="left:430px;top:267px;width:2px;height:34px;background:#000"></div>
<div style="left:517px;top:267px;width:2px;height:34px;background:#000"></div>
<div style="left:612px;top:267px;width:2px;height:34px;background:#000"></div>
<div style="left:691px;top:267px;width:2px;height:34px;background:#000"></div>
<div style="left:770px;top:267px;width:2px;height:34px;background:#000"></div>
<div style="left:849px;top:267px;width:2px;height:34px;background:#000"></div>
<div style="left:936px;top:267px;width:2px;height:34px;background:#000"></div>
<div style="left:1023px;top:267px;width:2px;height:34px;background:#000"></div>
<div style="left:430px;top:299px;width:342px;height:3px;background:#000"></div>
<div style="left:430px;top:315px;width:342px;height:3px;background:#000"></div>
<div style="left:430px;top:299px;width:2px;height:18px;background:#000"></div>
<div style="left:517px;top:299px;width:2px;height:18px;background:#000"></div>
<div style="left:612px;top:299px;width:2px;height:18px;background:#000"></div>
<div style="left:691px;top:299px;width:2px;height:18px;background:#000"></div>
<div style="left:770px;top:299px;width:2px;height:18px;background:#000"></div>
<div style="left:342px;top:315px;width:430px;height:3px;background:#000"></div>
<div style="left:342px;top:331px;width:430px;height:3px;background:#000"></div>
<div style="left:342px;top:315px;width:2px;height:18px;background:#000"></div>
<div style="left:430px;top:315px;width:2px;height:18px;background:#000"></div>
<div style="left:517px;top:315px;width:2px;height:18px;background:#000"></div>
<div style="left:612px;top:315px;width:2px;height:18px;background:#000"></div>
<div style="left:691px;top:315px;width:2px;height:18px;background:#000"></div>
<div style="left:770px;top:315px;width:2px;height:18px;background:#000"></div>
<div style="left:849px;top:315px;width:176px;height:3px;background:#000"></div>
<div style="left:849px;top:331px;width:176px;height:3px;background:#000"></div>
<div style="left:849px;top:315px;width:2px;height:18px;background:#000"></div>
<div style="left:936px;top:315px;width:2px;height:18px;background:#000"></div>
<div style="left:1023px;top:315px;width:2px;height:18px;background:#000"></div>
<div style="left:430px;top:331px;width:263px;height:3px;background:#000"></div>
<div style="left:430px;top:347px;width:263px;height:3px;background:#000"></div>
<div style="left:430px;top:331px;width:2px;height:18px;background:#000"></div>
<div style="left:517px;top:331px;width:2px;height:18px;background:#000"></div>
<div style="left:612px;top:331px;width:2px;height:18px;background:#000"></div>
<div style="left:691px;top:331px;width:2px;height:18px;background:#000"></div>
<div style="left:342px;top:347px;width:351px;height:3px;background:#000"></div>
<div style="left:342px;top:363px;width:351px;height:3px;background:#000"></div>
<div style="left:342px;top:363px;width:351px;height:3px;background:#000"></div>
<div style="left:342px;top:379px;width:351px;height:3px;background:#000"></div>
<div style="left:342px;top:379px;width:351px;height:3px;background:#000"></div>
<div style="left:342px;top:395px;width:351px;height:3px;background:#000"></div>
<div style="left:342px;top:347px;width:2px;height:50px;background:#000"></div>
<div style="left:430px;top:347px;width:2px;height:50px;background:#000"></div>
<div style="left:517px;top:347px;width:2px;height:50px;background:#000"></div>
<div style="left:612px;top:347px;width:2px;height:50px;background:#000"></div>
<div style="left:691px;top:347px;width:2px;height:50px;background:#000"></div>
<div style="left:849px;top:347px;width:176px;height:3px;background:#000"></div>
<div style="left:849px;top:363px;width:176px;height:3px;background:#000"></div>
<div style="left:849px;top:363px;width:176px;height:3px;background:#000"></div>
<div style="left:849px;top:379px;width:176px;height:3px;background:#000"></div>
<div style="left:849px;top:379px;width:176px;height:3px;background:#000"></div>
<div style="left:849px;top:395px;width:176px;height:3px;background:#000"></div>
<div style="left:849px;top:347px;width:2px;height:50px;background:#000"></div>
<div style="left:936px;top:347px;width:2px;height:50px;background:#000"></div>
<div style="left:1023px;top:347px;width:2px;height:50px;background:#000"></div>
<div class="t" style="left:35px;top:351.69px;font-size:11px;font-weight:bold;color:#800000">Gemeinkosten der Hauptkostenstellen</div>
<div class="t" style="left:35px;top:367.69px;font-size:11px;font-weight:bold;color:#008000">Einzelkosten (Zuschlagsbasis)</div>
<div class="t" style="left:35px;top:383.69000000000005px;font-size:11px;font-weight:bold;color:#0000ff">Zuschlagssätze</div>
<div class="t" style="left:344px;width:86px;top:351.69px;font-size:11px;text-align:center;font-weight:bold;letter-spacing:0.5px;color:#800000">517.014</div>
<div class="t" style="left:344px;width:86px;top:367.69px;font-size:11px;text-align:center;font-weight:bold;letter-spacing:0.5px;color:#008000">456.789</div>
<div class="t" style="left:344px;width:86px;top:383.69px;font-size:11px;text-align:center;font-weight:bold;letter-spacing:0.5px;color:#0000ff">113,2%</div>
<div class="t" style="left:432px;width:85px;top:351.69px;font-size:11px;text-align:center;font-weight:bold;letter-spacing:0.5px;color:#800000">891.517</div>
<div class="t" style="left:432px;width:85px;top:367.69px;font-size:11px;text-align:center;font-weight:bold;letter-spacing:0.5px;color:#008000">350.550</div>
<div class="t" style="left:432px;width:85px;top:383.69px;font-size:11px;text-align:center;font-weight:bold;letter-spacing:0.5px;color:#0000ff">254,3%</div>
<div class="t" style="left:519px;width:93px;top:351.69px;font-size:11px;text-align:center;font-weight:bold;letter-spacing:0.5px;color:#800000">743.277</div>
<div class="t" style="left:519px;width:93px;top:367.69px;font-size:11px;text-align:center;font-weight:bold;letter-spacing:0.5px;color:#008000">237.653</div>
<div class="t" style="left:519px;width:93px;top:383.69px;font-size:11px;text-align:center;font-weight:bold;letter-spacing:0.5px;color:#0000ff">312,8%</div>
<div class="t" style="left:614px;width:77px;top:351.69px;font-size:11px;text-align:center;font-weight:bold;letter-spacing:0.5px;color:#800000">477.779</div>
<div class="t" style="left:614px;width:77px;top:367.69px;font-size:11px;text-align:center;font-weight:bold;letter-spacing:0.5px;color:#008000">399.415</div>
<div class="t" style="left:614px;width:77px;top:383.69px;font-size:11px;text-align:center;font-weight:bold;letter-spacing:0.5px;color:#0000ff">119,6%</div>
<div class="t" style="left:851px;width:85px;top:351.69px;font-size:11px;text-align:center;font-weight:bold;letter-spacing:0.5px;color:#800000">271.859</div>
<div class="t" style="left:846px;width:85px;top:367.69px;font-size:11px;text-align:center;font-weight:bold;color:#008080">3.905.106</div>
<div class="t" style="left:851px;width:85px;top:383.69px;font-size:11px;text-align:center;font-weight:bold;letter-spacing:0.5px;color:#000080">7,0%</div>
<div class="t" style="left:940px;width:85px;top:351.69px;font-size:11px;text-align:center;font-weight:bold;letter-spacing:0.5px;color:#800000">271.859</div>
<div class="t" style="left:934px;width:85px;top:367.69px;font-size:11px;text-align:center;font-weight:bold;color:#008080">3.905.106</div>
<div class="t" style="left:938px;width:85px;top:383.69px;font-size:11px;text-align:center;font-weight:bold;letter-spacing:0.5px;color:#000080">5,0%</div>
<div style="left:342px;top:411px;width:272px;height:3px;background:#000"></div>
<div style="left:342px;top:427px;width:272px;height:3px;background:#000"></div>
<div style="left:342px;top:548px;width:272px;height:3px;background:#000"></div>
<div style="left:342px;top:411px;width:2px;height:150px;background:#000"></div>
<div style="left:612px;top:411px;width:2px;height:150px;background:#000"></div>
<div class="t" style="left:345px;top:415.69000000000005px;font-size:11px;font-weight:bold;color:#800080">Berechnung der Herstellkosten</div>
<div class="t" style="left:344px;top:430.69000000000005px;font-size:11px;letter-spacing:0.5px;color:#800080">MEK</div>
<div class="t" style="left:521px;top:430.69000000000005px;font-size:11px;letter-spacing:0.5px;color:#800080">456.789</div>
<div class="t" style="left:344px;top:445.69000000000005px;font-size:11px;letter-spacing:0.5px;color:#800080">MGK</div>
<div class="t" style="left:521px;top:445.69000000000005px;font-size:11px;letter-spacing:0.5px;color:#800080">517.014</div>
<div class="t" style="left:344px;top:460.69000000000005px;font-size:11px;letter-spacing:0.5px;color:#800080">FEK[A]</div>
<div class="t" style="left:521px;top:460.69000000000005px;font-size:11px;letter-spacing:0.5px;color:#800080">350.550</div>
<div class="t" style="left:344px;top:475.69000000000005px;font-size:11px;letter-spacing:0.5px;color:#800080">FGK[A]</div>
<div class="t" style="left:521px;top:475.69000000000005px;font-size:11px;letter-spacing:0.5px;color:#800080">891.517</div>
<div class="t" style="left:344px;top:490.69000000000005px;font-size:11px;letter-spacing:0.5px;color:#800080">FEK[B]</div>
<div class="t" style="left:521px;top:490.69000000000005px;font-size:11px;letter-spacing:0.5px;color:#800080">237.653</div>
<div class="t" style="left:344px;top:505.69000000000005px;font-size:11px;letter-spacing:0.5px;color:#800080">FGK[B]</div>
<div class="t" style="left:521px;top:505.69000000000005px;font-size:11px;letter-spacing:0.5px;color:#800080">743.277</div>
<div class="t" style="left:344px;top:520.69px;font-size:11px;letter-spacing:0.5px;color:#800080">FEK[C]</div>
<div class="t" style="left:521px;top:520.69px;font-size:11px;letter-spacing:0.5px;color:#800080">399.415</div>
<div class="t" style="left:344px;top:536.69px;font-size:11px;letter-spacing:0.5px;color:#800080">FGK[C]</div>
<div class="t" style="left:521px;top:536.69px;font-size:11px;letter-spacing:0.5px;color:#800080">477.779</div>
<div class="t" style="left:345px;top:552.69px;font-size:11px;font-weight:bold;color:#000">Herstellkosten der Periode</div>
<div class="t" style="left:531px;top:552.69px;font-size:11px;font-weight:bold;color:#800080">4.073.995</div>
<div style="left:342px;top:18px;width:1px;height:16px;background:#fff"></div>
<div style="left:343px;top:18px;width:1px;height:15px;background:#000080"></div>
<div style="left:342px;top:18px;width:90px;height:1px;background:#fff"></div>
<div style="left:431px;top:18px;width:1px;height:16px;background:#fff"></div>
<div style="left:430px;top:32px;width:4px;height:4px;background:#fff"></div>
<div style="left:431px;top:33px;width:2px;height:2px;background:#000"></div>
</div>
<svg style="left:0;top:0" width="40" height="744"><rect x="12.5" y="153.5" width="6" height="6" fill="#a040a0" stroke="#000"/><path d="M20 150 A4 4 0 0 1 20 158 Z" fill="#ffff60" stroke="#000" stroke-width="1"/><path d="M20 150 A4 4 0 0 0 20 158" fill="#fff" stroke="#000" stroke-width="1"/><path d="M14.5 163 L18.5 157 L22.5 163 Z" fill="#40d0d0" stroke="#000" stroke-width="0.8"/><path d="M23 148 L27.5 151 L23 154 Z" fill="#00c000" stroke="#000" stroke-width="0.5"/><rect x="12.5" y="173.5" width="13" height="12" fill="#fff" stroke="#000" stroke-width="1.5"/><path d="M12 177.5 L26 177.5 M12 181.5 L26 181.5 M16.5 173 L16.5 186 M21.5 173 L21.5 186" stroke="#000" stroke-width="1.2"/><rect x="16" y="176.5" width="7" height="6" fill="#ffff60" stroke="#101090" stroke-width="1.5"/><path d="M23 171 L27.5 174 L23 177 Z" fill="#00c000" stroke="#000" stroke-width="0.5"/><circle cx="17.5" cy="203.5" r="5.5" fill="#a040a0" stroke="#000" stroke-width="1.2"/><path d="M17.5 203.5 L17.5 198 A5.5 5.5 0 0 1 23 203.5 Z" fill="#40d0d0"/><path d="M17.5 203.5 L17.5 198 A5.5 5.5 0 0 0 12.5 206 Z" fill="#ffff60"/><circle cx="17.5" cy="203.5" r="5.5" fill="none" stroke="#000" stroke-width="1.2"/><path d="M23 194 L27.5 197 L23 200 Z" fill="#00c000" stroke="#000" stroke-width="0.5"/><rect x="23" y="201" width="2" height="2" fill="#000"/><path d="M12.5 231 L12.5 224.5 L20 224.5" fill="none" stroke="#000" stroke-width="1.5"/><path d="M15 232 L23 225 L25 227 L17 233 Z" fill="#1030d0" stroke="#000080" stroke-width="0.8"/><path d="M23 217 L27.5 220 L23 223 Z" fill="#00c000" stroke="#000" stroke-width="0.5"/><rect x="13" y="243" width="9" height="5" fill="#b8b8b8"/><rect x="13" y="243" width="9" height="1" fill="#fff"/><path d="M18 256 L17 251 L19 250 L19 245 L21 245 L21 250 L25 251 L25 256 Z" fill="#ffff80" stroke="#000" stroke-width="1"/><path d="M23 240 L27.5 243 L23 246 Z" fill="#00c000" stroke="#000" stroke-width="0.5"/><rect x="12.5" y="274.5" width="9" height="11" fill="#e8e8e8" stroke="#a8a8a8"/><path d="M14 277.5 L20 277.5 M14 279.5 L20 279.5 M14 281.5 L20 281.5 M14 283.5 L19 283.5" stroke="#b0b0b0"/><path d="M23.5 271 L23.5 279 M19.5 275 L27.5 275" stroke="#a8a8a8" stroke-width="1.5"/><rect x="11.5" y="297.5" width="13" height="12" fill="#fff" stroke="#000080" stroke-width="2"/><path d="M14 307 L14 302 Q14 299 17 299" fill="none" stroke="#0020e0" stroke-width="2"/><rect x="14" y="307" width="8" height="2" fill="#ffff60"/><path d="M17 300 L22 295 L27 300 L22 305 Z" fill="#c0c0c0" stroke="#000" stroke-width="1"/><path d="M18 301 L22 305" stroke="#c00000" stroke-width="1"/><text x="11" y="326" font-size="8" font-weight="bold" font-family="Liberation Sans" fill="#000" letter-spacing="0.3">ABC</text><path d="M11 327 L15 331 L26 324" fill="none" stroke="#000080" stroke-width="2.2"/><text x="11" y="351" font-size="8" font-weight="bold" font-family="Liberation Sans" fill="#000" letter-spacing="0.3">ABC</text><path d="M11 353 Q13.5 350.5 16 353 Q18.5 355.5 21 353 Q23.5 350.5 26 353" fill="none" stroke="#ff0000" stroke-width="1.2"/><rect x="13" y="366" width="4" height="4" fill="#000"/><rect x="21" y="366" width="4" height="4" fill="#000"/><rect x="12" y="369" width="6" height="9" fill="#000"/><rect x="20" y="369" width="6" height="9" fill="#000"/><rect x="17" y="371" width="3" height="4" fill="#000"/><rect x="14" y="374" width="1" height="2" fill="#ffff00"/><rect x="22" y="374" width="1" height="2" fill="#ffff00"/><rect x="18" y="372" width="1" height="1" fill="#ffff00"/><rect x="22" y="368" width="1" height="1" fill="#ffff00"/><rect x="14" y="370" width="1" height="2" fill="#fff"/><rect x="11.5" y="388.5" width="15" height="12" fill="#fff" stroke="#000" stroke-width="1"/><rect x="12" y="389" width="15" height="2" fill="#000"/><path d="M15.5 389 L15.5 401" stroke="#000"/><path d="M16 393.5 L26 393.5 M16 395.5 L26 395.5 M16 397.5 L26 397.5" stroke="#9a9a9a"/><path d="M13 393.5 L14 393.5 M13 395.5 L14 395.5 M13 397.5 L14 397.5" stroke="#555"/><path d="M11 426 L23 426 L19 430 L19 433 L15 433 L15 430 Z" fill="#fff" stroke="#000" stroke-width="1.3"/><path d="M14 427.5 L20 427.5" stroke="#d0c000" stroke-width="1.2"/><path d="M23.5 418 L23.5 425 M20 421.5 L27 421.5" stroke="#888" stroke-width="1.5"/><text x="10.5" y="448" font-size="10" font-weight="bold" font-family="Liberation Sans" fill="#000080">A</text><path d="M13 449 L17 453" stroke="#000080" stroke-width="1.2"/><path d="M18 454 L15.5 453 L17 451.5 Z" fill="#000080"/><text x="20" y="457" font-size="9" font-weight="bold" font-family="Liberation Sans" fill="#000">Z</text><text x="10.5" y="471" font-size="10" font-weight="bold" font-family="Liberation Sans" fill="#000080">Z</text><path d="M13 472 L17 476" stroke="#000080" stroke-width="1.2"/><path d="M18 477 L15.5 476 L17 474.5 Z" fill="#000080"/><text x="18" y="480" font-size="10.5" font-weight="bold" font-family="Liberation Sans" fill="#000">A</text><rect x="12.5" y="496.5" width="13.5" height="3.5" fill="#fff" stroke="#000" stroke-width="1.5"/><path d="M19.5 496 L19.5 500" stroke="#000" stroke-width="1.5"/><rect x="12.5" y="502.5" width="6.5" height="6.5" fill="#fff" stroke="#000" stroke-width="1.5"/><path d="M12 505.8 L19 505.8" stroke="#000" stroke-width="1.3"/><rect x="12.5" y="519.5" width="13.5" height="3.5" fill="#fff" stroke="#a8a8a8" stroke-width="1.5"/><path d="M19.5 519 L19.5 523" stroke="#a8a8a8" stroke-width="1.5"/><rect x="12.5" y="525.5" width="6.5" height="6.5" fill="#fff" stroke="#a8a8a8" stroke-width="1.5"/><path d="M12 528.8 L19 528.8" stroke="#a8a8a8" stroke-width="1.3"/><path d="M21 525 L27 532 M27 525 L21 532" stroke="#9a9a9a" stroke-width="2.2"/></svg>
<div style="left:1002px;top:140px;width:17px;height:558px;background:#ececec"></div>
<div style="left:1002px;top:140px;width:17px;height:4px;background:#000"></div>
<div style="left:1003px;top:144px;width:15px;height:15px;background:#dedede;border-top:1px solid #fff;border-left:1px solid #fff;border-right:1px solid #333;border-bottom:1px solid #333;box-sizing:border-box"></div>
<svg style="left:1006px;top:148px" width="9" height="6" shape-rendering="crispEdges"><path d="M0 5 L8 5 L4 0 Z" fill="#000" shape-rendering="auto"/></svg>
<div style="left:1003px;top:270px;width:15px;height:143px;background:#dcdcdc;border-top:1px solid #fff;border-left:1px solid #fff;border-right:1px solid #333;border-bottom:1px solid #333;box-sizing:border-box"></div>
<div style="left:1003px;top:682px;width:15px;height:15px;background:#dedede;border-top:1px solid #fff;border-left:1px solid #fff;border-right:1px solid #333;border-bottom:1px solid #333;box-sizing:border-box"></div>
<svg style="left:1006px;top:687px" width="9" height="6" shape-rendering="crispEdges"><path d="M0 0 L8 0 L4 5 Z" fill="#000" shape-rendering="auto"/></svg>
<div style="left:34px;top:698px;width:985px;height:16px;background:#dedede"></div>
<div style="left:1002px;top:698px;width:17px;height:16px;background:#dedede"></div>
<div style="left:35px;top:698px;width:16px;height:16px;background:#dedede;border-top:1px solid #fff;border-left:1px solid #fff;border-right:1px solid #333;border-bottom:1px solid #333;box-sizing:border-box"></div>
<div style="left:51px;top:698px;width:16px;height:16px;background:#dedede;border-top:1px solid #fff;border-left:1px solid #fff;border-right:1px solid #333;border-bottom:1px solid #333;box-sizing:border-box"></div>
<div style="left:67px;top:698px;width:16px;height:16px;background:#dedede;border-top:1px solid #fff;border-left:1px solid #fff;border-right:1px solid #333;border-bottom:1px solid #333;box-sizing:border-box"></div>
<div style="left:83px;top:698px;width:16px;height:16px;background:#dedede;border-top:1px solid #fff;border-left:1px solid #fff;border-right:1px solid #333;border-bottom:1px solid #333;box-sizing:border-box"></div>
<svg style="left:38px;top:701px" width="10" height="10" shape-rendering="crispEdges"><rect x="1" y="1" width="1.5" height="8" fill="#9a9a9a"/><path d="M8 1 L3 5 L8 9 Z" fill="#9a9a9a" shape-rendering="auto"/></svg>
<svg style="left:55px;top:701px" width="10" height="10" shape-rendering="crispEdges"><path d="M7 1 L2 5 L7 9 Z" fill="#9a9a9a" shape-rendering="auto"/></svg>
<svg style="left:71px;top:701px" width="10" height="10" shape-rendering="crispEdges"><path d="M2 1 L7 5 L2 9 Z" fill="#000" shape-rendering="auto"/></svg>
<svg style="left:86px;top:701px" width="10" height="10" shape-rendering="crispEdges"><path d="M1 1 L6 5 L1 9 Z" fill="#000" shape-rendering="auto"/><rect x="7" y="1" width="1.5" height="8" fill="#000"/></svg>
<svg style="left:0px;top:0px" width="1024" height="744" shape-rendering="auto"><path d="M99 699 L153 699 L158 713 L107 713 Z" fill="#dedede"/><path d="M153 699 L193 699 L188 713 L158 713 Z" fill="#fff"/><path d="M193.5 699 L243 699 L238 713 L188 713 Z" fill="#dedede"/><path d="M243.5 699 L299 699 L299 713 L238 713 Z" fill="#dedede"/><path d="M98.5 713.5 L98.5 698.5 L299.5 698.5 L299.5 713.5" fill="none" stroke="#000" stroke-width="1"/><path d="M99 698.5 L106.5 713.5 L299.5 713.5" fill="none" stroke="#000" stroke-width="1"/><path d="M152.5 699 L158 713.5 M188 713.5 L193.5 699 M238 713.5 L243.5 699" fill="none" stroke="#000" stroke-width="1.1"/></svg>
<div class="t" style="left:108px;top:700px;font-size:12px;color:#000">Aufgabe</div>
<div class="t" style="left:163px;top:700px;font-size:12px;color:#000">BAB</div>
<div class="t" style="left:194px;top:700px;font-size:12px;color:#000">Zeitblatt</div>
<div class="t" style="left:246px;top:700px;font-size:12px;color:#000">Stückkalk</div>
<div style="left:303px;top:698px;width:1px;height:16px;background:#8a8a8a"></div>
<div style="left:304px;top:698px;width:1px;height:16px;background:#fff"></div>
<div style="left:305px;top:698px;width:697px;height:16px;background:#ececec"></div>
<div style="left:305px;top:698px;width:16px;height:16px;background:#dedede;border-top:1px solid #fff;border-left:1px solid #fff;border-right:1px solid #333;border-bottom:1px solid #333;box-sizing:border-box"></div>
<svg style="left:309px;top:701px" width="10" height="10" shape-rendering="crispEdges"><path d="M7 1 L2 5 L7 9 Z" fill="#9a9a9a" shape-rendering="auto"/></svg>
<div style="left:321px;top:698px;width:303px;height:16px;background:#dcdcdc;border-top:1px solid #fff;border-left:1px solid #fff;border-right:1px solid #333;border-bottom:1px solid #333;box-sizing:border-box"></div>
<div style="left:983px;top:698px;width:16px;height:16px;background:#dedede;border-top:1px solid #fff;border-left:1px solid #fff;border-right:1px solid #333;border-bottom:1px solid #333;box-sizing:border-box"></div>
<svg style="left:987px;top:701px" width="10" height="10" shape-rendering="crispEdges"><path d="M2 1 L7 5 L2 9 Z" fill="#000" shape-rendering="auto"/></svg>
<div style="left:998px;top:698px;width:4px;height:16px;background:#000"></div>
<div style="left:5px;top:714px;width:1014px;height:1px;background:#fff"></div>
<div style="left:9px;top:718px;width:209px;height:17px;border-top:1px solid #8a8a8a;border-left:1px solid #8a8a8a;border-right:1px solid #fff;border-bottom:1px solid #fff;box-sizing:border-box"></div>
<div class="t" style="left:11px;top:721px;font-size:12px;color:#000">Tabelle 2 / 15</div>
<div style="left:220px;top:718px;width:246px;height:17px;border-top:1px solid #8a8a8a;border-left:1px solid #8a8a8a;border-right:1px solid #fff;border-bottom:1px solid #fff;box-sizing:border-box"></div>
<div class="t" style="left:222px;top:721px;font-size:12px;color:#000">TAB_BAB</div>
<div style="left:467px;top:718px;width:50px;height:17px;border-top:1px solid #8a8a8a;border-left:1px solid #8a8a8a;border-right:1px solid #fff;border-bottom:1px solid #fff;box-sizing:border-box"></div>
<div class="t" style="left:480px;top:721px;font-size:12px;color:#000">90%</div>
<div style="left:520px;top:718px;width:46px;height:17px;border-top:1px solid #8a8a8a;border-left:1px solid #8a8a8a;border-right:1px solid #fff;border-bottom:1px solid #fff;box-sizing:border-box"></div>
<div style="left:569px;top:718px;width:34px;height:17px;border-top:1px solid #8a8a8a;border-left:1px solid #8a8a8a;border-right:1px solid #fff;border-bottom:1px solid #fff;box-sizing:border-box"></div>
<div class="t" style="left:574px;top:721px;font-size:12px;color:#000">STD</div>
<div style="left:606px;top:718px;width:19px;height:17px;border-top:1px solid #8a8a8a;border-left:1px solid #8a8a8a;border-right:1px solid #fff;border-bottom:1px solid #fff;box-sizing:border-box"></div>
<div style="left:628px;top:718px;width:387px;height:17px;border-top:1px solid #8a8a8a;border-left:1px solid #8a8a8a;border-right:1px solid #fff;border-bottom:1px solid #fff;box-sizing:border-box"></div>
<div class="t" style="left:792px;top:721px;font-size:12px;color:#000">Summe=0</div>
<div style="left:4px;top:737px;width:1016px;height:1px;background:#7b7b7b"></div>
<div style="left:4px;top:738px;width:1016px;height:5px;background:#e8e8e8"></div>
<div style="left:2px;top:738px;width:18px;height:5px;background:#b8b8c8"></div>
<div style="left:1003px;top:738px;width:17px;height:5px;background:#b8b8c8"></div>
<div style="left:0px;top:743px;width:1024px;height:1px;background:#000"></div>
</body></html>
